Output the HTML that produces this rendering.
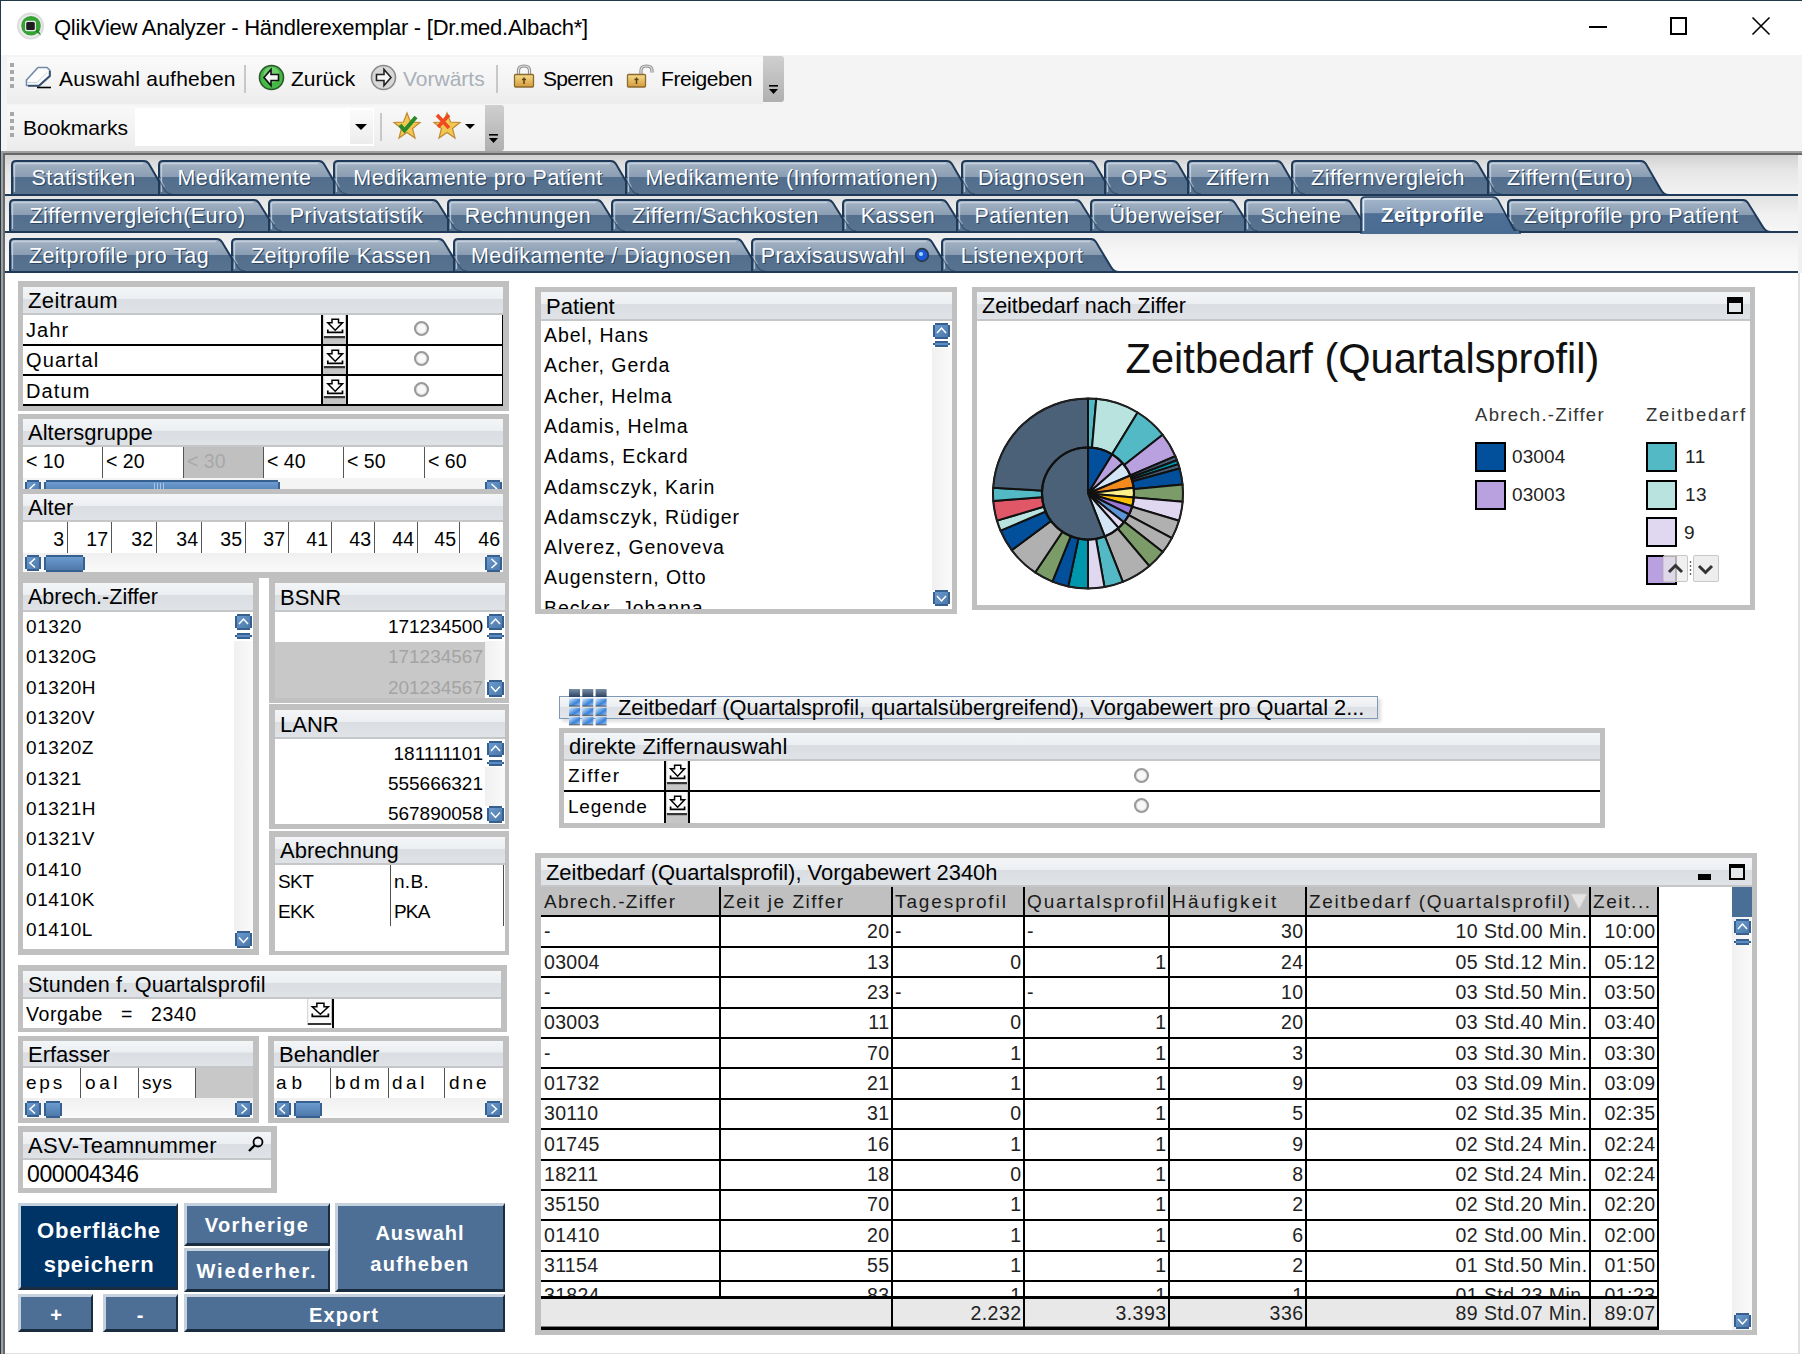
<!DOCTYPE html><html><head><meta charset="utf-8"><style>
*{margin:0;padding:0;box-sizing:border-box}
html,body{width:1802px;height:1354px;overflow:hidden;background:#fff;position:relative;font-family:"Liberation Sans",sans-serif;color:#000}
body div,body svg{position:absolute}
.t{white-space:pre;line-height:1}
.cap{background:linear-gradient(#f4f6f8 0%,#e9ecef 45%,#dde1e6 46%,#dfe3e8 100%);border-bottom:1px solid #c4c6c8}
.frame{background:#c0c0c0}
.sb{background:#4f7db3;border:1px solid #35608f;border-radius:2px}
.btn{background:#4e7097;border-top:2px solid #b8c4d0;border-left:2px solid #b8c4d0;border-right:2px solid #223b57;border-bottom:2px solid #223b57;color:#fff;font-weight:bold;text-align:center;text-shadow:1px 1px 0 #2a3f58}
</style></head><body><div style="left:0px;top:0px;width:1802px;height:55px;background:#fff"></div>
<div style="left:0px;top:0px;width:1802px;height:1px;background:#22394a"></div>
<div style="left:0px;top:0px;width:1px;height:1354px;background:#22394a"></div>
<svg style="left:16px;top:11px" width="30" height="30" viewBox="0 0 30 30">
<circle cx="14.5" cy="15" r="13.5" fill="#dcdcdc"/>
<circle cx="14.5" cy="15" r="11.5" fill="#ececec"/>
<circle cx="15" cy="14.8" r="9.8" fill="#36a236"/>
<path d="M19 20 L25 24.5 L22 18Z" fill="#1e8a1e"/>
<rect x="9" y="9.8" width="11" height="10.5" rx="2" fill="#e8e8e8"/>
<rect x="10.2" y="11" width="8.6" height="8" rx="1.5" fill="#1e1e1e"/>
</svg>
<div class="t" style="left:54px;top:17px;font-size:22px;letter-spacing:-0.25px;color:#000">QlikView Analyzer - Händlerexemplar - [Dr.med.Albach*]</div>
<div style="left:1589px;top:26px;width:18px;height:2px;background:#000"></div>
<div style="left:1670px;top:17px;width:17px;height:18px;border:2px solid #000"></div>
<svg style="left:1751px;top:16px" width="20" height="20" viewBox="0 0 20 20"><path d="M1.5 1.5L18.5 18.5M18.5 1.5L1.5 18.5" stroke="#000" stroke-width="1.6"/></svg>
<div style="left:1px;top:55px;width:1801px;height:96px;background:#f4f4f4"></div>
<div style="left:7px;top:57px;width:756px;height:47px;background:linear-gradient(#fafafa,#f3f3f3 60%,#ececec)"></div>
<div style="left:10px;top:63px;width:4px;height:4px;background:#a8a8a8"></div>
<div style="left:10px;top:70px;width:4px;height:4px;background:#a8a8a8"></div>
<div style="left:10px;top:77px;width:4px;height:4px;background:#a8a8a8"></div>
<div style="left:10px;top:84px;width:4px;height:4px;background:#a8a8a8"></div>
<div style="left:763px;top:56px;width:21px;height:46px;background:linear-gradient(#cfcfcf,#b0b0b0);border-radius:0 3px 3px 0"></div>
<svg style="left:767px;top:84px" width="14" height="14" viewBox="0 0 14 14"><rect x="2" y="1" width="9" height="1.6" fill="#000"/><path d="M2 5h9l-4.5 5z" fill="#000"/></svg>
<svg style="left:25px;top:66px" width="28" height="24" viewBox="0 0 28 24">
<path d="M1.5,19.5 V14 L13,1.5 H22 L24.8,4.3 V10 L14,19.8Z" fill="#fdfdfd" stroke="#7189a8" stroke-width="1.6" stroke-linejoin="round"/>
<path d="M24.8,5 V10 L14,19.8 H3" fill="none" stroke="#3a5272" stroke-width="2"/>
<path d="M3,16.5 H12 L22,6.5" fill="none" stroke="#c8d2de" stroke-width="1"/>
<path d="M12,21.5 H26" stroke="#000" stroke-width="1.6"/>
</svg>
<div class="t" style="left:59px;top:68px;font-size:21px;letter-spacing:0.25px;color:#000">Auswahl aufheben</div>
<div style="left:244px;top:65px;width:2px;height:28px;background:#c8c8c8"></div>
<svg style="left:258px;top:64px" width="27" height="27" viewBox="0 0 27 27">
<circle cx="13.5" cy="13.5" r="12" fill="#45b845" stroke="#2a5a2a" stroke-width="1.6"/>
<circle cx="13.5" cy="11" r="8" fill="#8fdc8f" opacity=".6"/>
<path d="M6 13.5 L13 5.5 V10.5 H20.5 V16.5 H13 V21.5Z" fill="#f4f4f4" stroke="#111" stroke-width="1.6"/>
</svg>
<div class="t" style="left:291px;top:68px;font-size:21px;color:#000">Zurück</div>
<svg style="left:370px;top:64px" width="27" height="27" viewBox="0 0 27 27">
<circle cx="13.5" cy="13.5" r="12" fill="#d8d8d8" stroke="#8a8a8a" stroke-width="1.6"/>
<path d="M21 13.5 L14 5.5 V10.5 H6.5 V16.5 H14 V21.5Z" fill="#f8f8f8" stroke="#222" stroke-width="1.6"/>
</svg>
<div class="t" style="left:403px;top:68px;font-size:21px;color:#a9b0b8">Vorwärts</div>
<div style="left:496px;top:65px;width:2px;height:28px;background:#c8c8c8"></div>
<svg style="left:513px;top:64px" width="22" height="25" viewBox="0 0 22 25"><defs><linearGradient id="lk" x1="0" y1="0" x2="0" y2="1"><stop offset="0" stop-color="#f6dc8c"/><stop offset="1" stop-color="#d49a3a"/></linearGradient></defs>
<path d="M5.5 11 V6.5 Q5.5 2 11 2 Q16.5 2 16.5 6.5 V11" fill="none" stroke="#8c8c8c" stroke-width="3.2"/>
<path d="M5.5 11 V6.5 Q5.5 2 11 2 Q16.5 2 16.5 6.5 V11" fill="none" stroke="#e6e6e6" stroke-width="1.2"/>
<rect x="1.5" y="10.5" width="19" height="12.5" rx="1" fill="url(#lk)" stroke="#8a6a30" stroke-width="1.3"/>
<path d="M11 13.5 V20 M9 15.5 H13" stroke="#5a4015" stroke-width="1.5"/>
</svg>
<div class="t" style="left:543px;top:68px;font-size:21px;letter-spacing:-0.7px;color:#000">Sperren</div>
<svg style="left:626px;top:64px" width="30" height="25" viewBox="0 0 30 25"><defs><linearGradient id="lk2" x1="0" y1="0" x2="0" y2="1"><stop offset="0" stop-color="#f6dc8c"/><stop offset="1" stop-color="#d49a3a"/></linearGradient></defs>
<path d="M15 11 V6.5 Q15 2 20.5 2 Q26 2 26 6.5 V8.5" fill="none" stroke="#8c8c8c" stroke-width="3.2"/>
<path d="M15 11 V6.5 Q15 2 20.5 2 Q26 2 26 6.5 V8.5" fill="none" stroke="#e6e6e6" stroke-width="1.2"/>
<rect x="1.5" y="10.5" width="18" height="12.5" rx="1" fill="url(#lk2)" stroke="#8a6a30" stroke-width="1.3"/>
<path d="M10.5 13.5 V20 M8.5 15.5 H12.5" stroke="#5a4015" stroke-width="1.5"/>
</svg>
<div class="t" style="left:661px;top:68px;font-size:21px;letter-spacing:-0.4px;color:#000">Freigeben</div>
<div style="left:7px;top:106px;width:478px;height:45px;background:linear-gradient(#f8f8f8,#f2f2f2 60%,#ebebeb)"></div>
<div style="left:10px;top:112px;width:4px;height:4px;background:#a8a8a8"></div>
<div style="left:10px;top:119px;width:4px;height:4px;background:#a8a8a8"></div>
<div style="left:10px;top:126px;width:4px;height:4px;background:#a8a8a8"></div>
<div style="left:10px;top:133px;width:4px;height:4px;background:#a8a8a8"></div>
<div class="t" style="left:23px;top:117px;font-size:21px;color:#000">Bookmarks</div>
<div style="left:135px;top:108px;width:239px;height:38px;background:#fff"></div>
<div style="left:350px;top:110px;width:23px;height:34px;background:linear-gradient(#fbfbfb,#ececec)"></div>
<svg style="left:354px;top:122px" width="14" height="10" viewBox="0 0 14 10"><path d="M1 2h12l-6 6z" fill="#000"/></svg>
<div style="left:380px;top:113px;width:2px;height:28px;background:#c8c8c8"></div>
<svg style="left:392px;top:111px" width="30" height="30" viewBox="0 0 30 30">
<path d="M15 2 L18.5 11 L28 11.5 L20.5 17.5 L23 27 L15 21.5 L7 27 L9.5 17.5 L2 11.5 L11.5 11Z" fill="#f3c850" stroke="#c08830" stroke-width="1.2"/>
<path d="M8 14 L12.5 19.5 L24 6" fill="none" stroke="#2a8a2a" stroke-width="4"/>
</svg>
<svg style="left:432px;top:111px" width="30" height="30" viewBox="0 0 30 30">
<path d="M15 2 L18.5 11 L28 11.5 L20.5 17.5 L23 27 L15 21.5 L7 27 L9.5 17.5 L2 11.5 L11.5 11Z" fill="#f3c850" stroke="#c08830" stroke-width="1.2"/>
<path d="M5 4 L17 17 M17 4 L6 16" fill="none" stroke="#f04a20" stroke-width="3.6"/>
</svg>
<svg style="left:464px;top:123px" width="12" height="8" viewBox="0 0 12 8"><path d="M1 1h10l-5 5z" fill="#000"/></svg>
<div style="left:485px;top:105px;width:19px;height:46px;background:linear-gradient(#cfcfcf,#b0b0b0);border-radius:0 3px 3px 0"></div>
<svg style="left:487px;top:133px" width="14" height="14" viewBox="0 0 14 14"><rect x="2" y="1" width="9" height="1.6" fill="#000"/><path d="M2 5h9l-4.5 5z" fill="#000"/></svg>
<div style="left:1px;top:151px;width:1801px;height:2px;background:#a0a0a0"></div>
<div style="left:3px;top:153px;width:1799px;height:2px;background:#686868"></div>
<div style="left:1px;top:151px;width:2px;height:1203px;background:#a0a0a0"></div>
<div style="left:3px;top:153px;width:2px;height:1201px;background:#686868"></div>
<div style="left:5px;top:155px;width:1793px;height:39px;background:linear-gradient(#d2d2d2,#e6e6e6 40%,#f2f2f2)"></div>
<div style="left:5px;top:196px;width:1793px;height:35px;background:linear-gradient(#e2e2e2,#f0f0f0 50%,#f6f6f6)"></div>
<div style="left:5px;top:233px;width:1793px;height:38px;background:linear-gradient(#ececec,#f6f6f6 50%,#fafafa)"></div>
<div style="left:1798px;top:155px;width:4px;height:118px;background:#f0f0f0"></div>
<svg style="left:0;top:150px" width="1802" height="130" viewBox="0 150 1802 130"><defs><linearGradient id="tg" x1="0" y1="0" x2="0" y2="1"><stop offset="0" stop-color="#a6b5c6"/><stop offset=".47" stop-color="#8a9db2"/><stop offset=".48" stop-color="#536f8d"/><stop offset="1" stop-color="#58728f"/></linearGradient><linearGradient id="ta" x1="0" y1="0" x2="0" y2="1"><stop offset="0" stop-color="#a4b6ca"/><stop offset=".45" stop-color="#8ba2bb"/><stop offset=".46" stop-color="#4f6f95"/><stop offset="1" stop-color="#4a6c93"/></linearGradient></defs><rect x="5" y="194" width="1793" height="2" fill="#1f3a59"/><path d="M12,195 L12,165 Q12,161 16,161 L144,161 Q147,161 149,164 L164,190 Q167,195 172,195 Z" fill="url(#tg)" stroke="#1f3a59" stroke-width="2"/><path d="M14.5,192 L14.5,165 Q14.5,163.5 17,163.5 L143,163.5" fill="none" stroke="#cad7e4" stroke-width="1.3" opacity=".8"/><path d="M159,195 L159,165 Q159,161 163,161 L319,161 Q322,161 324,164 L339,190 Q342,195 347,195 Z" fill="url(#tg)" stroke="#1f3a59" stroke-width="2"/><path d="M161.5,192 L161.5,165 Q161.5,163.5 164,163.5 L318,163.5" fill="none" stroke="#cad7e4" stroke-width="1.3" opacity=".8"/><path d="M158,177 L164,189 Q167,194 172,194" fill="none" stroke="#1f3a59" stroke-width="1.4" opacity=".55"/><path d="M159.5,178 L164.5,187" fill="none" stroke="#c0cedc" stroke-width="1.2" opacity=".6"/><path d="M334,195 L334,165 Q334,161 338,161 L611,161 Q614,161 616,164 L631,190 Q634,195 639,195 Z" fill="url(#tg)" stroke="#1f3a59" stroke-width="2"/><path d="M336.5,192 L336.5,165 Q336.5,163.5 339,163.5 L610,163.5" fill="none" stroke="#cad7e4" stroke-width="1.3" opacity=".8"/><path d="M333,177 L339,189 Q342,194 347,194" fill="none" stroke="#1f3a59" stroke-width="1.4" opacity=".55"/><path d="M334.5,178 L339.5,187" fill="none" stroke="#c0cedc" stroke-width="1.2" opacity=".6"/><path d="M626,195 L626,165 Q626,161 630,161 L947,161 Q950,161 952,164 L967,190 Q970,195 975,195 Z" fill="url(#tg)" stroke="#1f3a59" stroke-width="2"/><path d="M628.5,192 L628.5,165 Q628.5,163.5 631,163.5 L946,163.5" fill="none" stroke="#cad7e4" stroke-width="1.3" opacity=".8"/><path d="M625,177 L631,189 Q634,194 639,194" fill="none" stroke="#1f3a59" stroke-width="1.4" opacity=".55"/><path d="M626.5,178 L631.5,187" fill="none" stroke="#c0cedc" stroke-width="1.2" opacity=".6"/><path d="M962,195 L962,165 Q962,161 966,161 L1090,161 Q1093,161 1095,164 L1110,190 Q1113,195 1118,195 Z" fill="url(#tg)" stroke="#1f3a59" stroke-width="2"/><path d="M964.5,192 L964.5,165 Q964.5,163.5 967,163.5 L1089,163.5" fill="none" stroke="#cad7e4" stroke-width="1.3" opacity=".8"/><path d="M961,177 L967,189 Q970,194 975,194" fill="none" stroke="#1f3a59" stroke-width="1.4" opacity=".55"/><path d="M962.5,178 L967.5,187" fill="none" stroke="#c0cedc" stroke-width="1.2" opacity=".6"/><path d="M1105,195 L1105,165 Q1105,161 1109,161 L1173,161 Q1176,161 1178,164 L1193,190 Q1196,195 1201,195 Z" fill="url(#tg)" stroke="#1f3a59" stroke-width="2"/><path d="M1107.5,192 L1107.5,165 Q1107.5,163.5 1110,163.5 L1172,163.5" fill="none" stroke="#cad7e4" stroke-width="1.3" opacity=".8"/><path d="M1104,177 L1110,189 Q1113,194 1118,194" fill="none" stroke="#1f3a59" stroke-width="1.4" opacity=".55"/><path d="M1105.5,178 L1110.5,187" fill="none" stroke="#c0cedc" stroke-width="1.2" opacity=".6"/><path d="M1188,195 L1188,165 Q1188,161 1192,161 L1277,161 Q1280,161 1282,164 L1297,190 Q1300,195 1305,195 Z" fill="url(#tg)" stroke="#1f3a59" stroke-width="2"/><path d="M1190.5,192 L1190.5,165 Q1190.5,163.5 1193,163.5 L1276,163.5" fill="none" stroke="#cad7e4" stroke-width="1.3" opacity=".8"/><path d="M1187,177 L1193,189 Q1196,194 1201,194" fill="none" stroke="#1f3a59" stroke-width="1.4" opacity=".55"/><path d="M1188.5,178 L1193.5,187" fill="none" stroke="#c0cedc" stroke-width="1.2" opacity=".6"/><path d="M1292,195 L1292,165 Q1292,161 1296,161 L1473,161 Q1476,161 1478,164 L1493,190 Q1496,195 1501,195 Z" fill="url(#tg)" stroke="#1f3a59" stroke-width="2"/><path d="M1294.5,192 L1294.5,165 Q1294.5,163.5 1297,163.5 L1472,163.5" fill="none" stroke="#cad7e4" stroke-width="1.3" opacity=".8"/><path d="M1291,177 L1297,189 Q1300,194 1305,194" fill="none" stroke="#1f3a59" stroke-width="1.4" opacity=".55"/><path d="M1292.5,178 L1297.5,187" fill="none" stroke="#c0cedc" stroke-width="1.2" opacity=".6"/><path d="M1488,195 L1488,165 Q1488,161 1492,161 L1641,161 Q1644,161 1646,164 L1661,190 Q1664,195 1669,195 Z" fill="url(#tg)" stroke="#1f3a59" stroke-width="2"/><path d="M1490.5,192 L1490.5,165 Q1490.5,163.5 1493,163.5 L1640,163.5" fill="none" stroke="#cad7e4" stroke-width="1.3" opacity=".8"/><path d="M1487,177 L1493,189 Q1496,194 1501,194" fill="none" stroke="#1f3a59" stroke-width="1.4" opacity=".55"/><path d="M1488.5,178 L1493.5,187" fill="none" stroke="#c0cedc" stroke-width="1.2" opacity=".6"/><rect x="5" y="231" width="1793" height="2" fill="#1f3a59"/><path d="M10,232 L10,204 Q10,200 14,200 L254,200 Q257,200 259,203 L274,227 Q277,232 282,232 Z" fill="url(#tg)" stroke="#1f3a59" stroke-width="2"/><path d="M12.5,229 L12.5,204 Q12.5,202.5 15,202.5 L253,202.5" fill="none" stroke="#cad7e4" stroke-width="1.3" opacity=".8"/><path d="M269,232 L269,204 Q269,200 273,200 L433,200 Q436,200 438,203 L453,227 Q456,232 461,232 Z" fill="url(#tg)" stroke="#1f3a59" stroke-width="2"/><path d="M271.5,229 L271.5,204 Q271.5,202.5 274,202.5 L432,202.5" fill="none" stroke="#cad7e4" stroke-width="1.3" opacity=".8"/><path d="M268,216 L274,226 Q277,231 282,231" fill="none" stroke="#1f3a59" stroke-width="1.4" opacity=".55"/><path d="M269.5,217 L274.5,224" fill="none" stroke="#c0cedc" stroke-width="1.2" opacity=".6"/><path d="M448,232 L448,204 Q448,200 452,200 L597,200 Q600,200 602,203 L617,227 Q620,232 625,232 Z" fill="url(#tg)" stroke="#1f3a59" stroke-width="2"/><path d="M450.5,229 L450.5,204 Q450.5,202.5 453,202.5 L596,202.5" fill="none" stroke="#cad7e4" stroke-width="1.3" opacity=".8"/><path d="M447,216 L453,226 Q456,231 461,231" fill="none" stroke="#1f3a59" stroke-width="1.4" opacity=".55"/><path d="M448.5,217 L453.5,224" fill="none" stroke="#c0cedc" stroke-width="1.2" opacity=".6"/><path d="M612,232 L612,204 Q612,200 616,200 L828,200 Q831,200 833,203 L848,227 Q851,232 856,232 Z" fill="url(#tg)" stroke="#1f3a59" stroke-width="2"/><path d="M614.5,229 L614.5,204 Q614.5,202.5 617,202.5 L827,202.5" fill="none" stroke="#cad7e4" stroke-width="1.3" opacity=".8"/><path d="M611,216 L617,226 Q620,231 625,231" fill="none" stroke="#1f3a59" stroke-width="1.4" opacity=".55"/><path d="M612.5,217 L617.5,224" fill="none" stroke="#c0cedc" stroke-width="1.2" opacity=".6"/><path d="M843,232 L843,204 Q843,200 847,200 L942,200 Q945,200 947,203 L962,227 Q965,232 970,232 Z" fill="url(#tg)" stroke="#1f3a59" stroke-width="2"/><path d="M845.5,229 L845.5,204 Q845.5,202.5 848,202.5 L941,202.5" fill="none" stroke="#cad7e4" stroke-width="1.3" opacity=".8"/><path d="M842,216 L848,226 Q851,231 856,231" fill="none" stroke="#1f3a59" stroke-width="1.4" opacity=".55"/><path d="M843.5,217 L848.5,224" fill="none" stroke="#c0cedc" stroke-width="1.2" opacity=".6"/><path d="M957,232 L957,204 Q957,200 961,200 L1076,200 Q1079,200 1081,203 L1096,227 Q1099,232 1104,232 Z" fill="url(#tg)" stroke="#1f3a59" stroke-width="2"/><path d="M959.5,229 L959.5,204 Q959.5,202.5 962,202.5 L1075,202.5" fill="none" stroke="#cad7e4" stroke-width="1.3" opacity=".8"/><path d="M956,216 L962,226 Q965,231 970,231" fill="none" stroke="#1f3a59" stroke-width="1.4" opacity=".55"/><path d="M957.5,217 L962.5,224" fill="none" stroke="#c0cedc" stroke-width="1.2" opacity=".6"/><path d="M1091,232 L1091,204 Q1091,200 1095,200 L1230,200 Q1233,200 1235,203 L1250,227 Q1253,232 1258,232 Z" fill="url(#tg)" stroke="#1f3a59" stroke-width="2"/><path d="M1093.5,229 L1093.5,204 Q1093.5,202.5 1096,202.5 L1229,202.5" fill="none" stroke="#cad7e4" stroke-width="1.3" opacity=".8"/><path d="M1090,216 L1096,226 Q1099,231 1104,231" fill="none" stroke="#1f3a59" stroke-width="1.4" opacity=".55"/><path d="M1091.5,217 L1096.5,224" fill="none" stroke="#c0cedc" stroke-width="1.2" opacity=".6"/><path d="M1245,232 L1245,204 Q1245,200 1249,200 L1346,200 Q1349,200 1351,203 L1366,227 Q1369,232 1374,232 Z" fill="url(#tg)" stroke="#1f3a59" stroke-width="2"/><path d="M1247.5,229 L1247.5,204 Q1247.5,202.5 1250,202.5 L1345,202.5" fill="none" stroke="#cad7e4" stroke-width="1.3" opacity=".8"/><path d="M1244,216 L1250,226 Q1253,231 1258,231" fill="none" stroke="#1f3a59" stroke-width="1.4" opacity=".55"/><path d="M1245.5,217 L1250.5,224" fill="none" stroke="#c0cedc" stroke-width="1.2" opacity=".6"/><path d="M1508,232 L1508,204 Q1508,200 1512,200 L1743,200 Q1746,200 1748,203 L1763,227 Q1766,232 1771,232 Z" fill="url(#tg)" stroke="#1f3a59" stroke-width="2"/><path d="M1510.5,229 L1510.5,204 Q1510.5,202.5 1513,202.5 L1742,202.5" fill="none" stroke="#cad7e4" stroke-width="1.3" opacity=".8"/><path d="M1507,216 L1513,226 Q1516,231 1521,231" fill="none" stroke="#1f3a59" stroke-width="1.4" opacity=".55"/><path d="M1508.5,217 L1513.5,224" fill="none" stroke="#c0cedc" stroke-width="1.2" opacity=".6"/><path d="M1361,233 L1361,201 Q1361,197 1365,197 L1493,197 Q1496,197 1498,200 L1513,228 Q1516,233 1521,233 Z" fill="url(#ta)" stroke="#1f3a59" stroke-width="1.6"/><rect x="1362" y="231" width="157" height="3" fill="#4a6c93"/><path d="M1363.5,231 L1363.5,201 Q1363.5,199 1366,199 L1492,199" fill="none" stroke="#e0e8f0" stroke-width="1.5"/><rect x="5" y="271" width="1793" height="2" fill="#1f3a59"/><path d="M10,272 L10,243 Q10,239 14,239 L217,239 Q220,239 222,242 L237,267 Q240,272 245,272 Z" fill="url(#tg)" stroke="#1f3a59" stroke-width="2"/><path d="M12.5,269 L12.5,243 Q12.5,241.5 15,241.5 L216,241.5" fill="none" stroke="#cad7e4" stroke-width="1.3" opacity=".8"/><path d="M232,272 L232,243 Q232,239 236,239 L439,239 Q442,239 444,242 L459,267 Q462,272 467,272 Z" fill="url(#tg)" stroke="#1f3a59" stroke-width="2"/><path d="M234.5,269 L234.5,243 Q234.5,241.5 237,241.5 L438,241.5" fill="none" stroke="#cad7e4" stroke-width="1.3" opacity=".8"/><path d="M231,255 L237,266 Q240,271 245,271" fill="none" stroke="#1f3a59" stroke-width="1.4" opacity=".55"/><path d="M232.5,256 L237.5,264" fill="none" stroke="#c0cedc" stroke-width="1.2" opacity=".6"/><path d="M454,272 L454,243 Q454,239 458,239 L737,239 Q740,239 742,242 L757,267 Q760,272 765,272 Z" fill="url(#tg)" stroke="#1f3a59" stroke-width="2"/><path d="M456.5,269 L456.5,243 Q456.5,241.5 459,241.5 L736,241.5" fill="none" stroke="#cad7e4" stroke-width="1.3" opacity=".8"/><path d="M453,255 L459,266 Q462,271 467,271" fill="none" stroke="#1f3a59" stroke-width="1.4" opacity=".55"/><path d="M454.5,256 L459.5,264" fill="none" stroke="#c0cedc" stroke-width="1.2" opacity=".6"/><path d="M752,272 L752,243 Q752,239 756,239 L927,239 Q930,239 932,242 L947,267 Q950,272 955,272 Z" fill="url(#tg)" stroke="#1f3a59" stroke-width="2"/><path d="M754.5,269 L754.5,243 Q754.5,241.5 757,241.5 L926,241.5" fill="none" stroke="#cad7e4" stroke-width="1.3" opacity=".8"/><path d="M751,255 L757,266 Q760,271 765,271" fill="none" stroke="#1f3a59" stroke-width="1.4" opacity=".55"/><path d="M752.5,256 L757.5,264" fill="none" stroke="#c0cedc" stroke-width="1.2" opacity=".6"/><path d="M942,272 L942,243 Q942,239 946,239 L1091,239 Q1094,239 1096,242 L1111,267 Q1114,272 1119,272 Z" fill="url(#tg)" stroke="#1f3a59" stroke-width="2"/><path d="M944.5,269 L944.5,243 Q944.5,241.5 947,241.5 L1090,241.5" fill="none" stroke="#cad7e4" stroke-width="1.3" opacity=".8"/><path d="M941,255 L947,266 Q950,271 955,271" fill="none" stroke="#1f3a59" stroke-width="1.4" opacity=".55"/><path d="M942.5,256 L947.5,264" fill="none" stroke="#c0cedc" stroke-width="1.2" opacity=".6"/></svg>
<div class="t" style="left:-116.5px;top:168.0px;width:400px;text-align:center;font-size:21.5px;letter-spacing:0.45px;color:#fff;text-shadow:1px 1px 0 #2c4560">Statistiken</div>
<div class="t" style="left:44.5px;top:168.0px;width:400px;text-align:center;font-size:21.5px;letter-spacing:0.45px;color:#fff;text-shadow:1px 1px 0 #2c4560">Medikamente</div>
<div class="t" style="left:278.0px;top:168.0px;width:400px;text-align:center;font-size:21.5px;letter-spacing:0.45px;color:#fff;text-shadow:1px 1px 0 #2c4560">Medikamente pro Patient</div>
<div class="t" style="left:592.0px;top:168.0px;width:400px;text-align:center;font-size:21.5px;letter-spacing:0.45px;color:#fff;text-shadow:1px 1px 0 #2c4560">Medikamente (Informationen)</div>
<div class="t" style="left:831.5px;top:168.0px;width:400px;text-align:center;font-size:21.5px;letter-spacing:0.45px;color:#fff;text-shadow:1px 1px 0 #2c4560">Diagnosen</div>
<div class="t" style="left:944.5px;top:168.0px;width:400px;text-align:center;font-size:21.5px;letter-spacing:0.45px;color:#fff;text-shadow:1px 1px 0 #2c4560">OPS</div>
<div class="t" style="left:1038.0px;top:168.0px;width:400px;text-align:center;font-size:21.5px;letter-spacing:0.45px;color:#fff;text-shadow:1px 1px 0 #2c4560">Ziffern</div>
<div class="t" style="left:1188.0px;top:168.0px;width:400px;text-align:center;font-size:21.5px;letter-spacing:0.45px;color:#fff;text-shadow:1px 1px 0 #2c4560">Ziffernvergleich</div>
<div class="t" style="left:1370.0px;top:168.0px;width:400px;text-align:center;font-size:21.5px;letter-spacing:0.45px;color:#fff;text-shadow:1px 1px 0 #2c4560">Ziffern(Euro)</div>
<div class="t" style="left:-62.5px;top:206.0px;width:400px;text-align:center;font-size:21.5px;letter-spacing:0.45px;color:#fff;text-shadow:1px 1px 0 #2c4560">Ziffernvergleich(Euro)</div>
<div class="t" style="left:156.5px;top:206.0px;width:400px;text-align:center;font-size:21.5px;letter-spacing:0.45px;color:#fff;text-shadow:1px 1px 0 #2c4560">Privatstatistik</div>
<div class="t" style="left:328.0px;top:206.0px;width:400px;text-align:center;font-size:21.5px;letter-spacing:0.45px;color:#fff;text-shadow:1px 1px 0 #2c4560">Rechnungen</div>
<div class="t" style="left:525.5px;top:206.0px;width:400px;text-align:center;font-size:21.5px;letter-spacing:0.45px;color:#fff;text-shadow:1px 1px 0 #2c4560">Ziffern/Sachkosten</div>
<div class="t" style="left:698.0px;top:206.0px;width:400px;text-align:center;font-size:21.5px;letter-spacing:0.45px;color:#fff;text-shadow:1px 1px 0 #2c4560">Kassen</div>
<div class="t" style="left:822.0px;top:206.0px;width:400px;text-align:center;font-size:21.5px;letter-spacing:0.45px;color:#fff;text-shadow:1px 1px 0 #2c4560">Patienten</div>
<div class="t" style="left:966.0px;top:206.0px;width:400px;text-align:center;font-size:21.5px;letter-spacing:0.45px;color:#fff;text-shadow:1px 1px 0 #2c4560">Überweiser</div>
<div class="t" style="left:1101.0px;top:206.0px;width:400px;text-align:center;font-size:21.5px;letter-spacing:0.45px;color:#fff;text-shadow:1px 1px 0 #2c4560">Scheine</div>
<div class="t" style="left:1232.5px;top:204.5px;width:400px;text-align:center;font-size:21.5px;letter-spacing:0.45px;color:#fff;text-shadow:1px 1px 0 #2c4560;font-weight:bold;font-size:20.5px;letter-spacing:0.35px">Zeitprofile</div>
<div class="t" style="left:1431.0px;top:206.0px;width:400px;text-align:center;font-size:21.5px;letter-spacing:0.45px;color:#fff;text-shadow:1px 1px 0 #2c4560">Zeitprofile pro Patient</div>
<div class="t" style="left:-81.0px;top:245.5px;width:400px;text-align:center;font-size:21.5px;letter-spacing:0.45px;color:#fff;text-shadow:1px 1px 0 #2c4560">Zeitprofile pro Tag</div>
<div class="t" style="left:141.0px;top:245.5px;width:400px;text-align:center;font-size:21.5px;letter-spacing:0.45px;color:#fff;text-shadow:1px 1px 0 #2c4560">Zeitprofile Kassen</div>
<div class="t" style="left:401.0px;top:245.5px;width:400px;text-align:center;font-size:21.5px;letter-spacing:0.45px;color:#fff;text-shadow:1px 1px 0 #2c4560">Medikamente / Diagnosen</div>
<div class="t" style="left:633.0px;top:245.5px;width:400px;text-align:center;font-size:21.5px;letter-spacing:0.45px;color:#fff;text-shadow:1px 1px 0 #2c4560">Praxisauswahl</div>
<div class="t" style="left:822.0px;top:245.5px;width:400px;text-align:center;font-size:21.5px;letter-spacing:0.45px;color:#fff;text-shadow:1px 1px 0 #2c4560">Listenexport</div>
<svg style="left:913px;top:246px" width="18" height="18" viewBox="0 0 18 18"><circle cx="9" cy="9" r="6.3" fill="#1a5ad8" stroke="#2a3a50" stroke-width="1.8"/><circle cx="8" cy="8" r="2" fill="#a8d8ff"/></svg>
<div style="left:18px;top:281px;width:491px;height:130px;background:#c0c0c0"></div>
<div style="left:23px;top:287px;width:480px;height:28px;background:linear-gradient(#f3f5f7 0,#eceff2 12px,#dadee3 12px,#dfe3e7 26px,#c4c6c8 26px)"></div>
<div class="t" style="left:28px;top:290.2px;font-size:22px;letter-spacing:0.4px">Zeitraum</div>
<div style="left:23px;top:315px;width:480px;height:91px;background:#fff"></div>
<div style="left:23px;top:344px;width:480px;height:2px;background:#000"></div>
<div style="left:23px;top:374px;width:480px;height:2px;background:#000"></div>
<div style="left:23px;top:404px;width:480px;height:2px;background:#000"></div>
<div style="left:502px;top:315px;width:1px;height:91px;background:#000"></div>
<div style="left:321px;top:315px;width:2px;height:91px;background:#000"></div>
<div style="left:346px;top:315px;width:2px;height:91px;background:#000"></div>
<svg style="left:323px;top:315px" width="23" height="29" viewBox="0 0 23 29"><rect x="0" y="0" width="23" height="29" fill="#c6c6c6"/><rect x="0" y="0" width="22" height="21" fill="#fafafa"/><rect x="0" y="0" width="1.2" height="21" fill="#d8d8d8"/><rect x="1" y="21" width="21" height="2.2" fill="#1a1a1a" opacity=".85"/><path d="M9.00,4.2 H15.50 V7.8 H19.50 L12.20,15.2 L4.80,7.8 H9.00Z" fill="#fff" stroke="#000" stroke-width="1.5" stroke-linejoin="miter"/><path d="M4.80,14.5 V17.3 H19.50 V14.5" fill="none" stroke="#000" stroke-width="1.7"/></svg>
<svg style="left:412.5px;top:320.0px" width="17.0" height="17.0" viewBox="0 0 17.0 17.0"><circle cx="8.5" cy="8.5" r="6.5" fill="#ececec" stroke="#9a9a9a" stroke-width="2.2"/><circle cx="8.5" cy="8.5" r="4.0" fill="#f8f8f8"/></svg>
<div class="t" style="left:26px;top:320.1px;font-size:20px;letter-spacing:1.1px;">Jahr</div>
<svg style="left:323px;top:346px" width="23" height="28" viewBox="0 0 23 28"><rect x="0" y="0" width="23" height="28" fill="#c6c6c6"/><rect x="0" y="0" width="22" height="20" fill="#fafafa"/><rect x="0" y="0" width="1.2" height="20" fill="#d8d8d8"/><rect x="1" y="20" width="21" height="2.2" fill="#1a1a1a" opacity=".85"/><path d="M9.00,4.2 H15.50 V7.8 H19.50 L12.20,15.2 L4.80,7.8 H9.00Z" fill="#fff" stroke="#000" stroke-width="1.5" stroke-linejoin="miter"/><path d="M4.80,14.5 V17.3 H19.50 V14.5" fill="none" stroke="#000" stroke-width="1.7"/></svg>
<svg style="left:412.5px;top:350.3px" width="17.0" height="17.0" viewBox="0 0 17.0 17.0"><circle cx="8.5" cy="8.5" r="6.5" fill="#ececec" stroke="#9a9a9a" stroke-width="2.2"/><circle cx="8.5" cy="8.5" r="4.0" fill="#f8f8f8"/></svg>
<div class="t" style="left:26px;top:350.1px;font-size:20px;letter-spacing:1.1px;">Quartal</div>
<svg style="left:323px;top:376px" width="23" height="28" viewBox="0 0 23 28"><rect x="0" y="0" width="23" height="28" fill="#c6c6c6"/><rect x="0" y="0" width="22" height="20" fill="#fafafa"/><rect x="0" y="0" width="1.2" height="20" fill="#d8d8d8"/><rect x="1" y="20" width="21" height="2.2" fill="#1a1a1a" opacity=".85"/><path d="M9.00,4.2 H15.50 V7.8 H19.50 L12.20,15.2 L4.80,7.8 H9.00Z" fill="#fff" stroke="#000" stroke-width="1.5" stroke-linejoin="miter"/><path d="M4.80,14.5 V17.3 H19.50 V14.5" fill="none" stroke="#000" stroke-width="1.7"/></svg>
<svg style="left:412.5px;top:380.6px" width="17.0" height="17.0" viewBox="0 0 17.0 17.0"><circle cx="8.5" cy="8.5" r="6.5" fill="#ececec" stroke="#9a9a9a" stroke-width="2.2"/><circle cx="8.5" cy="8.5" r="4.0" fill="#f8f8f8"/></svg>
<div class="t" style="left:26px;top:380.6px;font-size:20px;letter-spacing:1.1px;">Datum</div>
<div style="left:23px;top:344px;width:480px;height:2px;background:#000"></div>
<div style="left:23px;top:374px;width:480px;height:2px;background:#000"></div>
<div style="left:23px;top:404px;width:480px;height:2px;background:#000"></div>
<div style="left:18px;top:414px;width:491px;height:80px;background:#c0c0c0"></div>
<div style="left:23px;top:419px;width:480px;height:28px;background:linear-gradient(#f3f5f7 0,#eceff2 12px,#dadee3 12px,#dfe3e7 26px,#c4c6c8 26px)"></div>
<div class="t" style="left:28px;top:422.2px;font-size:22px;letter-spacing:0px">Altersgruppe</div>
<div style="left:23px;top:447px;width:480px;height:32px;background:#fff"></div>
<div style="left:184px;top:447px;width:79px;height:31px;background:#c0c0c0"></div>
<div style="left:102px;top:447px;width:1px;height:31px;background:#555"></div>
<div style="left:183px;top:447px;width:1px;height:31px;background:#555"></div>
<div style="left:263px;top:447px;width:1px;height:31px;background:#555"></div>
<div style="left:343px;top:447px;width:1px;height:31px;background:#555"></div>
<div style="left:424px;top:447px;width:1px;height:31px;background:#555"></div>
<div class="t" style="left:26px;top:452.0px;font-size:19.5px;letter-spacing:0px;">&lt; 10</div>
<div class="t" style="left:106px;top:452.0px;font-size:19.5px;letter-spacing:0px;">&lt; 20</div>
<div class="t" style="left:187px;top:452.0px;font-size:19.5px;letter-spacing:0px;color:#a8a8a8">&lt; 30</div>
<div class="t" style="left:267px;top:452.0px;font-size:19.5px;letter-spacing:0px;">&lt; 40</div>
<div class="t" style="left:347px;top:452.0px;font-size:19.5px;letter-spacing:0px;">&lt; 50</div>
<div class="t" style="left:428px;top:452.0px;font-size:19.5px;letter-spacing:0px;">&lt; 60</div>
<div style="left:23px;top:478px;width:480px;height:11px;background:#f4f4f4"></div>
<svg style="left:25px;top:480px" width="16" height="17" viewBox="0 0 16 17"><defs><linearGradient id="sg25_480" x1="0" y1="0" x2="1" y2="1"><stop offset="0" stop-color="#6a9ad0"/><stop offset="1" stop-color="#4d78a8"/></linearGradient></defs><path d="M2,0 H14 V2 H16 V15 H14 V17 H2 V15 H0 V2 H2Z" fill="#35608f"/><rect x="2" y="2" width="12" height="13" fill="url(#sg25_480)"/><path d="M10.0,4.0 L5.0,8.5 L10.0,13.0" fill="none" stroke="#fff" stroke-width="1.5"/></svg>
<svg style="left:44px;top:480px" width="236" height="17" viewBox="0 0 236 17"><defs><linearGradient id="hg44_480" x1="0" y1="0" x2="0" y2="1"><stop offset="0" stop-color="#6c9bd0"/><stop offset="1" stop-color="#4e79a9"/></linearGradient></defs><path d="M2,0 H234 V2 H236 V15 H234 V17 H2 V15 H0 V2 H2Z" fill="#35608f"/><rect x="2" y="2" width="232" height="13" fill="url(#hg44_480)"/></svg>
<div style="left:154px;top:483px;width:1px;height:6px;background:#a8c4e4"></div>
<div style="left:157px;top:483px;width:1px;height:6px;background:#a8c4e4"></div>
<div style="left:160px;top:483px;width:1px;height:6px;background:#a8c4e4"></div>
<div style="left:163px;top:483px;width:1px;height:6px;background:#a8c4e4"></div>
<svg style="left:485px;top:480px" width="17" height="17" viewBox="0 0 17 17"><defs><linearGradient id="sg485_480" x1="0" y1="0" x2="1" y2="1"><stop offset="0" stop-color="#6a9ad0"/><stop offset="1" stop-color="#4d78a8"/></linearGradient></defs><path d="M2,0 H15 V2 H17 V15 H15 V17 H2 V15 H0 V2 H2Z" fill="#35608f"/><rect x="2" y="2" width="13" height="13" fill="url(#sg485_480)"/><path d="M6.5,4.0 L11.5,8.5 L6.5,13.0" fill="none" stroke="#fff" stroke-width="1.5"/></svg>
<div style="left:18px;top:489px;width:491px;height:89px;background:#c0c0c0"></div>
<div style="left:23px;top:494px;width:480px;height:28px;background:linear-gradient(#f3f5f7 0,#eceff2 12px,#dadee3 12px,#dfe3e7 26px,#c4c6c8 26px)"></div>
<div class="t" style="left:28px;top:497.2px;font-size:22px;letter-spacing:0px">Alter</div>
<div style="left:23px;top:522px;width:480px;height:31px;background:#fff"></div>
<div style="left:67px;top:522px;width:1px;height:31px;background:#555"></div>
<div style="left:111px;top:522px;width:1px;height:31px;background:#555"></div>
<div style="left:156px;top:522px;width:1px;height:31px;background:#555"></div>
<div style="left:201px;top:522px;width:1px;height:31px;background:#555"></div>
<div style="left:245px;top:522px;width:1px;height:31px;background:#555"></div>
<div style="left:288px;top:522px;width:1px;height:31px;background:#555"></div>
<div style="left:331px;top:522px;width:1px;height:31px;background:#555"></div>
<div style="left:374px;top:522px;width:1px;height:31px;background:#555"></div>
<div style="left:417px;top:522px;width:1px;height:31px;background:#555"></div>
<div style="left:459px;top:522px;width:1px;height:31px;background:#555"></div>
<div class="t" style="left:-536px;width:600px;text-align:right;top:529.5px;font-size:19.5px;letter-spacing:0px;">3</div>
<div class="t" style="left:-492px;width:600px;text-align:right;top:529.5px;font-size:19.5px;letter-spacing:0px;">17</div>
<div class="t" style="left:-447px;width:600px;text-align:right;top:529.5px;font-size:19.5px;letter-spacing:0px;">32</div>
<div class="t" style="left:-402px;width:600px;text-align:right;top:529.5px;font-size:19.5px;letter-spacing:0px;">34</div>
<div class="t" style="left:-358px;width:600px;text-align:right;top:529.5px;font-size:19.5px;letter-spacing:0px;">35</div>
<div class="t" style="left:-315px;width:600px;text-align:right;top:529.5px;font-size:19.5px;letter-spacing:0px;">37</div>
<div class="t" style="left:-272px;width:600px;text-align:right;top:529.5px;font-size:19.5px;letter-spacing:0px;">41</div>
<div class="t" style="left:-229px;width:600px;text-align:right;top:529.5px;font-size:19.5px;letter-spacing:0px;">43</div>
<div class="t" style="left:-186px;width:600px;text-align:right;top:529.5px;font-size:19.5px;letter-spacing:0px;">44</div>
<div class="t" style="left:-144px;width:600px;text-align:right;top:529.5px;font-size:19.5px;letter-spacing:0px;">45</div>
<div class="t" style="left:-100px;width:600px;text-align:right;top:529.5px;font-size:19.5px;letter-spacing:0px;">46</div>
<div style="left:23px;top:553px;width:480px;height:19px;background:linear-gradient(#f0f0f0,#fafafa)"></div>
<svg style="left:25px;top:555px" width="16" height="16" viewBox="0 0 16 16"><defs><linearGradient id="sg25_555" x1="0" y1="0" x2="1" y2="1"><stop offset="0" stop-color="#6a9ad0"/><stop offset="1" stop-color="#4d78a8"/></linearGradient></defs><path d="M2,0 H14 V2 H16 V14 H14 V16 H2 V14 H0 V2 H2Z" fill="#35608f"/><rect x="2" y="2" width="12" height="12" fill="url(#sg25_555)"/><path d="M10.0,3.5 L5.0,8.0 L10.0,12.5" fill="none" stroke="#fff" stroke-width="1.5"/></svg>
<svg style="left:44px;top:555px" width="41" height="17" viewBox="0 0 41 17"><defs><linearGradient id="hg44_555" x1="0" y1="0" x2="0" y2="1"><stop offset="0" stop-color="#6c9bd0"/><stop offset="1" stop-color="#4e79a9"/></linearGradient></defs><path d="M2,0 H39 V2 H41 V15 H39 V17 H2 V15 H0 V2 H2Z" fill="#35608f"/><rect x="2" y="2" width="37" height="13" fill="url(#hg44_555)"/></svg>
<svg style="left:485px;top:555px" width="17" height="17" viewBox="0 0 17 17"><defs><linearGradient id="sg485_555" x1="0" y1="0" x2="1" y2="1"><stop offset="0" stop-color="#6a9ad0"/><stop offset="1" stop-color="#4d78a8"/></linearGradient></defs><path d="M2,0 H15 V2 H17 V15 H15 V17 H2 V15 H0 V2 H2Z" fill="#35608f"/><rect x="2" y="2" width="13" height="13" fill="url(#sg485_555)"/><path d="M6.5,4.0 L11.5,8.5 L6.5,13.0" fill="none" stroke="#fff" stroke-width="1.5"/></svg>
<div style="left:18px;top:577px;width:241px;height:378px;background:#c0c0c0"></div>
<div style="left:259px;top:572px;width:10px;height:6px;background:#c0c0c0"></div>
<div style="left:23px;top:583px;width:230px;height:29px;background:linear-gradient(#f3f5f7 0,#eceff2 12px,#dadee3 12px,#dfe3e7 27px,#c4c6c8 27px)"></div>
<div class="t" style="left:28px;top:587.0px;font-size:21.5px;letter-spacing:0px">Abrech.-Ziffer</div>
<div style="left:23px;top:612px;width:230px;height:337px;background:#fff"></div>
<div style="left:234px;top:641px;width:19px;height:290px;background:linear-gradient(90deg,#f0f0f0,#fafafa)"></div>
<svg style="left:235px;top:614px" width="17" height="16" viewBox="0 0 17 16"><defs><linearGradient id="sg235_614" x1="0" y1="0" x2="1" y2="1"><stop offset="0" stop-color="#6a9ad0"/><stop offset="1" stop-color="#4d78a8"/></linearGradient></defs><path d="M2,0 H15 V2 H17 V14 H15 V16 H2 V14 H0 V2 H2Z" fill="#35608f"/><rect x="2" y="2" width="13" height="12" fill="url(#sg235_614)"/><path d="M4.0,10.0 L8.5,5.0 L13.0,10.0" fill="none" stroke="#fff" stroke-width="1.5"/></svg>
<svg style="left:235px;top:633px" width="17" height="6" viewBox="0 0 17 6"><path d="M2,0 H15 V2 H17 V4 H15 V6 H2 V4 H0 V2 H2Z" fill="#35608f"/><rect x="2" y="2" width="13" height="2" fill="#5d8cc4"/></svg>
<svg style="left:235px;top:931px" width="17" height="17" viewBox="0 0 17 17"><defs><linearGradient id="sg235_931" x1="0" y1="0" x2="1" y2="1"><stop offset="0" stop-color="#6a9ad0"/><stop offset="1" stop-color="#4d78a8"/></linearGradient></defs><path d="M2,0 H15 V2 H17 V15 H15 V17 H2 V15 H0 V2 H2Z" fill="#35608f"/><rect x="2" y="2" width="13" height="13" fill="url(#sg235_931)"/><path d="M4.0,6.5 L8.5,11.5 L13.0,6.5" fill="none" stroke="#fff" stroke-width="1.5"/></svg>
<div class="t" style="left:26px;top:616.9px;font-size:19px;letter-spacing:0.6px;">01320</div>
<div class="t" style="left:26px;top:647.3px;font-size:19px;letter-spacing:0.6px;">01320G</div>
<div class="t" style="left:26px;top:677.6px;font-size:19px;letter-spacing:0.6px;">01320H</div>
<div class="t" style="left:26px;top:708.0px;font-size:19px;letter-spacing:0.6px;">01320V</div>
<div class="t" style="left:26px;top:738.3px;font-size:19px;letter-spacing:0.6px;">01320Z</div>
<div class="t" style="left:26px;top:768.7px;font-size:19px;letter-spacing:0.6px;">01321</div>
<div class="t" style="left:26px;top:799.0px;font-size:19px;letter-spacing:0.6px;">01321H</div>
<div class="t" style="left:26px;top:829.4px;font-size:19px;letter-spacing:0.6px;">01321V</div>
<div class="t" style="left:26px;top:859.7px;font-size:19px;letter-spacing:0.6px;">01410</div>
<div class="t" style="left:26px;top:890.1px;font-size:19px;letter-spacing:0.6px;">01410K</div>
<div class="t" style="left:26px;top:920.4px;font-size:19px;letter-spacing:0.6px;">01410L</div>
<div style="left:269px;top:577px;width:240px;height:126px;background:#c0c0c0"></div>
<div style="left:275px;top:583px;width:230px;height:29px;background:linear-gradient(#f3f5f7 0,#eceff2 12px,#dadee3 12px,#dfe3e7 27px,#c4c6c8 27px)"></div>
<div class="t" style="left:280px;top:586.7px;font-size:22px;letter-spacing:0px">BSNR</div>
<div style="left:275px;top:612px;width:230px;height:86px;background:#fff"></div>
<div style="left:275px;top:642px;width:210px;height:56px;background:#c8c8c8"></div>
<div style="left:485px;top:641px;width:20px;height:39px;background:linear-gradient(90deg,#f0f0f0,#fafafa)"></div>
<svg style="left:487px;top:614px" width="17" height="16" viewBox="0 0 17 16"><defs><linearGradient id="sg487_614" x1="0" y1="0" x2="1" y2="1"><stop offset="0" stop-color="#6a9ad0"/><stop offset="1" stop-color="#4d78a8"/></linearGradient></defs><path d="M2,0 H15 V2 H17 V14 H15 V16 H2 V14 H0 V2 H2Z" fill="#35608f"/><rect x="2" y="2" width="13" height="12" fill="url(#sg487_614)"/><path d="M4.0,10.0 L8.5,5.0 L13.0,10.0" fill="none" stroke="#fff" stroke-width="1.5"/></svg>
<svg style="left:487px;top:633px" width="17" height="6" viewBox="0 0 17 6"><path d="M2,0 H15 V2 H17 V4 H15 V6 H2 V4 H0 V2 H2Z" fill="#35608f"/><rect x="2" y="2" width="13" height="2" fill="#5d8cc4"/></svg>
<svg style="left:487px;top:680px" width="17" height="17" viewBox="0 0 17 17"><defs><linearGradient id="sg487_680" x1="0" y1="0" x2="1" y2="1"><stop offset="0" stop-color="#6a9ad0"/><stop offset="1" stop-color="#4d78a8"/></linearGradient></defs><path d="M2,0 H15 V2 H17 V15 H15 V17 H2 V15 H0 V2 H2Z" fill="#35608f"/><rect x="2" y="2" width="13" height="13" fill="url(#sg487_680)"/><path d="M4.0,6.5 L8.5,11.5 L13.0,6.5" fill="none" stroke="#fff" stroke-width="1.5"/></svg>
<div class="t" style="left:-117px;width:600px;text-align:right;top:616.9px;font-size:19px;letter-spacing:0px;">171234500</div>
<div class="t" style="left:-117px;width:600px;text-align:right;top:647.4px;font-size:19px;letter-spacing:0px;color:#a4a4a4">171234567</div>
<div class="t" style="left:-117px;width:600px;text-align:right;top:677.9px;font-size:19px;letter-spacing:0px;color:#a4a4a4">201234567</div>
<div style="left:269px;top:704px;width:240px;height:125px;background:#c0c0c0"></div>
<div style="left:275px;top:710px;width:230px;height:29px;background:linear-gradient(#f3f5f7 0,#eceff2 12px,#dadee3 12px,#dfe3e7 27px,#c4c6c8 27px)"></div>
<div class="t" style="left:280px;top:713.7px;font-size:22px;letter-spacing:0px">LANR</div>
<div style="left:275px;top:739px;width:230px;height:85px;background:#fff"></div>
<div style="left:485px;top:767px;width:20px;height:39px;background:linear-gradient(90deg,#f0f0f0,#fafafa)"></div>
<svg style="left:487px;top:741px" width="17" height="16" viewBox="0 0 17 16"><defs><linearGradient id="sg487_741" x1="0" y1="0" x2="1" y2="1"><stop offset="0" stop-color="#6a9ad0"/><stop offset="1" stop-color="#4d78a8"/></linearGradient></defs><path d="M2,0 H15 V2 H17 V14 H15 V16 H2 V14 H0 V2 H2Z" fill="#35608f"/><rect x="2" y="2" width="13" height="12" fill="url(#sg487_741)"/><path d="M4.0,10.0 L8.5,5.0 L13.0,10.0" fill="none" stroke="#fff" stroke-width="1.5"/></svg>
<svg style="left:487px;top:760px" width="17" height="6" viewBox="0 0 17 6"><path d="M2,0 H15 V2 H17 V4 H15 V6 H2 V4 H0 V2 H2Z" fill="#35608f"/><rect x="2" y="2" width="13" height="2" fill="#5d8cc4"/></svg>
<svg style="left:487px;top:806px" width="17" height="17" viewBox="0 0 17 17"><defs><linearGradient id="sg487_806" x1="0" y1="0" x2="1" y2="1"><stop offset="0" stop-color="#6a9ad0"/><stop offset="1" stop-color="#4d78a8"/></linearGradient></defs><path d="M2,0 H15 V2 H17 V15 H15 V17 H2 V15 H0 V2 H2Z" fill="#35608f"/><rect x="2" y="2" width="13" height="13" fill="url(#sg487_806)"/><path d="M4.0,6.5 L8.5,11.5 L13.0,6.5" fill="none" stroke="#fff" stroke-width="1.5"/></svg>
<div class="t" style="left:-117px;width:600px;text-align:right;top:743.9px;font-size:19px;letter-spacing:0px;">181111101</div>
<div class="t" style="left:-117px;width:600px;text-align:right;top:773.9px;font-size:19px;letter-spacing:0px;">555666321</div>
<div class="t" style="left:-117px;width:600px;text-align:right;top:804.4px;font-size:19px;letter-spacing:0px;">567890058</div>
<div style="left:269px;top:831px;width:240px;height:124px;background:#c0c0c0"></div>
<div style="left:275px;top:837px;width:230px;height:28px;background:linear-gradient(#f3f5f7 0,#eceff2 12px,#dadee3 12px,#dfe3e7 26px,#c4c6c8 26px)"></div>
<div class="t" style="left:280px;top:840.2px;font-size:22px;letter-spacing:0px">Abrechnung</div>
<div style="left:275px;top:865px;width:230px;height:86px;background:#fff"></div>
<div style="left:390px;top:865px;width:1px;height:61px;background:#505050"></div>
<div style="left:503px;top:865px;width:1px;height:61px;background:#505050"></div>
<div class="t" style="left:278px;top:871.9px;font-size:19px;letter-spacing:-0.6px;">SKT</div>
<div class="t" style="left:278px;top:901.9px;font-size:19px;letter-spacing:-0.6px;">EKK</div>
<div class="t" style="left:394px;top:871.9px;font-size:19px;letter-spacing:0.3px;">n.B.</div>
<div class="t" style="left:394px;top:901.9px;font-size:19px;letter-spacing:-0.8px;">PKA</div>
<div style="left:18px;top:965px;width:489px;height:67px;background:#c0c0c0"></div>
<div style="left:23px;top:971px;width:478px;height:28px;background:linear-gradient(#f3f5f7 0,#eceff2 12px,#dadee3 12px,#dfe3e7 26px,#c4c6c8 26px)"></div>
<div class="t" style="left:28px;top:974.4px;font-size:21.6px;letter-spacing:0.2px">Stunden f. Quartalsprofil</div>
<div style="left:23px;top:999px;width:478px;height:29px;background:#fff"></div>
<div class="t" style="left:26px;top:1004.5px;font-size:19.5px;letter-spacing:0.6px;">Vorgabe   =   2340</div>
<svg style="left:307px;top:999px" width="25" height="26" viewBox="0 0 25 26"><rect x="0" y="0" width="25" height="26" fill="#c6c6c6"/><rect x="0" y="0" width="24" height="24" fill="#fafafa"/><rect x="0" y="0" width="1.2" height="24" fill="#d8d8d8"/><rect x="1" y="24" width="23" height="2.2" fill="#1a1a1a" opacity=".85"/><path d="M9.86,4.2 H16.98 V7.8 H21.36 L13.36,15.2 L5.26,7.8 H9.86Z" fill="#fff" stroke="#000" stroke-width="1.5" stroke-linejoin="miter"/><path d="M5.26,14.5 V17.3 H21.36 V14.5" fill="none" stroke="#000" stroke-width="1.7"/></svg>
<div style="left:332px;top:999px;width:2px;height:29px;background:#000"></div>
<div style="left:18px;top:1036px;width:241px;height:87px;background:#c0c0c0"></div>
<div style="left:23px;top:1041px;width:230px;height:27px;background:linear-gradient(#f3f5f7 0,#eceff2 11px,#dadee3 12px,#dfe3e7 25px,#c4c6c8 25px)"></div>
<div class="t" style="left:28px;top:1043.7px;font-size:22px;letter-spacing:0px">Erfasser</div>
<div style="left:23px;top:1068px;width:230px;height:31px;background:#fff"></div>
<div style="left:196px;top:1068px;width:57px;height:30px;background:#c8c8c8"></div>
<div style="left:80px;top:1068px;width:1px;height:30px;background:#555"></div>
<div style="left:138px;top:1068px;width:1px;height:30px;background:#555"></div>
<div style="left:195px;top:1068px;width:1px;height:30px;background:#555"></div>
<div class="t" style="left:26px;top:1072.9px;font-size:19px;letter-spacing:2.8px;">eps</div>
<div class="t" style="left:85px;top:1072.9px;font-size:19px;letter-spacing:3.6px;">oal</div>
<div class="t" style="left:142px;top:1072.9px;font-size:19px;letter-spacing:0.8px;">sys</div>
<div style="left:23px;top:1098px;width:230px;height:20px;background:linear-gradient(#f0f0f0,#fafafa)"></div>
<svg style="left:25px;top:1101px" width="16" height="16" viewBox="0 0 16 16"><defs><linearGradient id="sg25_1101" x1="0" y1="0" x2="1" y2="1"><stop offset="0" stop-color="#6a9ad0"/><stop offset="1" stop-color="#4d78a8"/></linearGradient></defs><path d="M2,0 H14 V2 H16 V14 H14 V16 H2 V14 H0 V2 H2Z" fill="#35608f"/><rect x="2" y="2" width="12" height="12" fill="url(#sg25_1101)"/><path d="M10.0,3.5 L5.0,8.0 L10.0,12.5" fill="none" stroke="#fff" stroke-width="1.5"/></svg>
<svg style="left:44px;top:1101px" width="18" height="17" viewBox="0 0 18 17"><defs><linearGradient id="hg44_1101" x1="0" y1="0" x2="0" y2="1"><stop offset="0" stop-color="#6c9bd0"/><stop offset="1" stop-color="#4e79a9"/></linearGradient></defs><path d="M2,0 H16 V2 H18 V15 H16 V17 H2 V15 H0 V2 H2Z" fill="#35608f"/><rect x="2" y="2" width="14" height="13" fill="url(#hg44_1101)"/></svg>
<svg style="left:235px;top:1101px" width="17" height="16" viewBox="0 0 17 16"><defs><linearGradient id="sg235_1101" x1="0" y1="0" x2="1" y2="1"><stop offset="0" stop-color="#6a9ad0"/><stop offset="1" stop-color="#4d78a8"/></linearGradient></defs><path d="M2,0 H15 V2 H17 V14 H15 V16 H2 V14 H0 V2 H2Z" fill="#35608f"/><rect x="2" y="2" width="13" height="12" fill="url(#sg235_1101)"/><path d="M6.5,3.5 L11.5,8.0 L6.5,12.5" fill="none" stroke="#fff" stroke-width="1.5"/></svg>
<div style="left:268px;top:1036px;width:241px;height:87px;background:#c0c0c0"></div>
<div style="left:274px;top:1041px;width:229px;height:27px;background:linear-gradient(#f3f5f7 0,#eceff2 11px,#dadee3 12px,#dfe3e7 25px,#c4c6c8 25px)"></div>
<div class="t" style="left:279px;top:1043.7px;font-size:22px;letter-spacing:0px">Behandler</div>
<div style="left:274px;top:1068px;width:229px;height:31px;background:#fff"></div>
<div style="left:330px;top:1068px;width:1px;height:30px;background:#555"></div>
<div style="left:388px;top:1068px;width:1px;height:30px;background:#555"></div>
<div style="left:444px;top:1068px;width:1px;height:30px;background:#555"></div>
<div class="t" style="left:276px;top:1072.9px;font-size:19px;letter-spacing:4.9px;">ab</div>
<div class="t" style="left:335px;top:1072.9px;font-size:19px;letter-spacing:3.9px;">bdm</div>
<div class="t" style="left:392px;top:1072.9px;font-size:19px;letter-spacing:3.5px;">dal</div>
<div class="t" style="left:449px;top:1072.9px;font-size:19px;letter-spacing:2.9px;">dne</div>
<div style="left:274px;top:1098px;width:229px;height:20px;background:linear-gradient(#f0f0f0,#fafafa)"></div>
<svg style="left:275px;top:1101px" width="16" height="16" viewBox="0 0 16 16"><defs><linearGradient id="sg275_1101" x1="0" y1="0" x2="1" y2="1"><stop offset="0" stop-color="#6a9ad0"/><stop offset="1" stop-color="#4d78a8"/></linearGradient></defs><path d="M2,0 H14 V2 H16 V14 H14 V16 H2 V14 H0 V2 H2Z" fill="#35608f"/><rect x="2" y="2" width="12" height="12" fill="url(#sg275_1101)"/><path d="M10.0,3.5 L5.0,8.0 L10.0,12.5" fill="none" stroke="#fff" stroke-width="1.5"/></svg>
<svg style="left:294px;top:1101px" width="28" height="17" viewBox="0 0 28 17"><defs><linearGradient id="hg294_1101" x1="0" y1="0" x2="0" y2="1"><stop offset="0" stop-color="#6c9bd0"/><stop offset="1" stop-color="#4e79a9"/></linearGradient></defs><path d="M2,0 H26 V2 H28 V15 H26 V17 H2 V15 H0 V2 H2Z" fill="#35608f"/><rect x="2" y="2" width="24" height="13" fill="url(#hg294_1101)"/></svg>
<svg style="left:485px;top:1101px" width="17" height="16" viewBox="0 0 17 16"><defs><linearGradient id="sg485_1101" x1="0" y1="0" x2="1" y2="1"><stop offset="0" stop-color="#6a9ad0"/><stop offset="1" stop-color="#4d78a8"/></linearGradient></defs><path d="M2,0 H15 V2 H17 V14 H15 V16 H2 V14 H0 V2 H2Z" fill="#35608f"/><rect x="2" y="2" width="13" height="12" fill="url(#sg485_1101)"/><path d="M6.5,3.5 L11.5,8.0 L6.5,12.5" fill="none" stroke="#fff" stroke-width="1.5"/></svg>
<div style="left:18px;top:1126px;width:259px;height:67px;background:#c0c0c0"></div>
<div style="left:23px;top:1132px;width:248px;height:28px;background:linear-gradient(#f3f5f7 0,#eceff2 12px,#dadee3 12px,#dfe3e7 26px,#c4c6c8 26px)"></div>
<div class="t" style="left:28px;top:1135.2px;font-size:22px;letter-spacing:0.3px">ASV-Teamnummer</div>
<div style="left:23px;top:1160px;width:248px;height:28px;background:#fff"></div>
<svg style="left:247px;top:1135px" width="18" height="18" viewBox="0 0 18 18"><circle cx="11" cy="7" r="4.5" fill="none" stroke="#000" stroke-width="1.8"/><path d="M8,10 L2,16" stroke="#000" stroke-width="2.4"/></svg>
<div class="t" style="left:27px;top:1162.5px;font-size:23px;letter-spacing:-0.4px;">000004346</div>
<div style="left:18px;top:1203px;width:160px;height:87px;background:#003366;border-top:3px solid #c5d1dd;border-left:3px solid #c5d1dd;border-bottom:3px solid #1a2c40;border-right:2px solid #1a2c40"></div>
<div class="t" style="left:-201px;width:600px;text-align:center;top:1220.4px;font-size:22px;letter-spacing:0.9px;color:#fff;font-weight:bold">Oberfläche</div>
<div class="t" style="left:-201px;width:600px;text-align:center;top:1254.4px;font-size:22px;letter-spacing:0.75px;color:#fff;font-weight:bold">speichern</div>
<div style="left:184px;top:1203px;width:146px;height:43px;background:#4e6f95;border-top:3px solid #c5d1dd;border-left:3px solid #c5d1dd;border-bottom:3px solid #1a2c40;border-right:2px solid #1a2c40"></div>
<div class="t" style="left:-43px;width:600px;text-align:center;top:1215.1px;font-size:20px;letter-spacing:1.4px;color:#fff;font-weight:bold">Vorherige</div>
<div style="left:184px;top:1248px;width:146px;height:44px;background:#4e6f95;border-top:3px solid #c5d1dd;border-left:3px solid #c5d1dd;border-bottom:3px solid #1a2c40;border-right:2px solid #1a2c40"></div>
<div class="t" style="left:-43px;width:600px;text-align:center;top:1261.1px;font-size:20px;letter-spacing:1.9px;color:#fff;font-weight:bold">Wiederher.</div>
<div style="left:335px;top:1203px;width:170px;height:89px;background:#4e6f95;border-top:3px solid #c5d1dd;border-left:3px solid #c5d1dd;border-bottom:3px solid #1a2c40;border-right:2px solid #1a2c40"></div>
<div class="t" style="left:120px;width:600px;text-align:center;top:1223.1px;font-size:20px;letter-spacing:1.0px;color:#fff;font-weight:bold">Auswahl</div>
<div class="t" style="left:120px;width:600px;text-align:center;top:1254.1px;font-size:20px;letter-spacing:1.3px;color:#fff;font-weight:bold">aufheben</div>
<div style="left:18px;top:1294px;width:75px;height:38px;background:#4e6f95;border-top:3px solid #c5d1dd;border-left:3px solid #c5d1dd;border-bottom:3px solid #1a2c40;border-right:2px solid #1a2c40"></div>
<div class="t" style="left:-244px;width:600px;text-align:center;top:1305.1px;font-size:20px;letter-spacing:0px;color:#fff;font-weight:bold">+</div>
<div style="left:103px;top:1294px;width:75px;height:38px;background:#4e6f95;border-top:3px solid #c5d1dd;border-left:3px solid #c5d1dd;border-bottom:3px solid #1a2c40;border-right:2px solid #1a2c40"></div>
<div class="t" style="left:-160px;width:600px;text-align:center;top:1305.1px;font-size:20px;letter-spacing:0px;color:#fff;font-weight:bold">-</div>
<div style="left:184px;top:1294px;width:321px;height:38px;background:#4e6f95;border-top:3px solid #c5d1dd;border-left:3px solid #c5d1dd;border-bottom:3px solid #1a2c40;border-right:2px solid #1a2c40"></div>
<div class="t" style="left:44px;width:600px;text-align:center;top:1305.1px;font-size:20px;letter-spacing:1.1px;color:#fff;font-weight:bold">Export</div>
<div style="left:535px;top:287px;width:422px;height:327px;background:#c0c0c0"></div>
<div style="left:541px;top:292px;width:411px;height:29px;background:linear-gradient(#f3f5f7 0,#eceff2 12px,#dadee3 12px,#dfe3e7 27px,#c4c6c8 27px)"></div>
<div class="t" style="left:546px;top:295.7px;font-size:22px;letter-spacing:0px">Patient</div>
<div style="left:541px;top:321px;width:411px;height:288px;background:#fff"></div>
<div style="left:541px;top:320px;width:390px;height:289px;overflow:hidden">
<div class="t" style="left:3px;top:6.0px;font-size:19.5px;letter-spacing:0.95px">Abel, Hans</div>
<div class="t" style="left:3px;top:36.3px;font-size:19.5px;letter-spacing:0.95px">Acher, Gerda</div>
<div class="t" style="left:3px;top:66.6px;font-size:19.5px;letter-spacing:0.95px">Acher, Helma</div>
<div class="t" style="left:3px;top:96.9px;font-size:19.5px;letter-spacing:0.95px">Adamis, Helma</div>
<div class="t" style="left:3px;top:127.2px;font-size:19.5px;letter-spacing:0.95px">Adams, Eckard</div>
<div class="t" style="left:3px;top:157.5px;font-size:19.5px;letter-spacing:0.95px">Adamsczyk, Karin</div>
<div class="t" style="left:3px;top:187.8px;font-size:19.5px;letter-spacing:0.95px">Adamsczyk, Rüdiger</div>
<div class="t" style="left:3px;top:218.1px;font-size:19.5px;letter-spacing:0.95px">Alverez, Genoveva</div>
<div class="t" style="left:3px;top:248.4px;font-size:19.5px;letter-spacing:0.95px">Augenstern, Otto</div>
<div class="t" style="left:3px;top:278.7px;font-size:19.5px;letter-spacing:0.95px">Becker, Johanna</div>
</div>
<div style="left:932px;top:348px;width:20px;height:242px;background:linear-gradient(90deg,#f0f0f0,#fafafa)"></div>
<svg style="left:933px;top:323px" width="17" height="16" viewBox="0 0 17 16"><defs><linearGradient id="sg933_323" x1="0" y1="0" x2="1" y2="1"><stop offset="0" stop-color="#6a9ad0"/><stop offset="1" stop-color="#4d78a8"/></linearGradient></defs><path d="M2,0 H15 V2 H17 V14 H15 V16 H2 V14 H0 V2 H2Z" fill="#35608f"/><rect x="2" y="2" width="13" height="12" fill="url(#sg933_323)"/><path d="M4.0,10.0 L8.5,5.0 L13.0,10.0" fill="none" stroke="#fff" stroke-width="1.5"/></svg>
<svg style="left:933px;top:341px" width="17" height="6" viewBox="0 0 17 6"><path d="M2,0 H15 V2 H17 V4 H15 V6 H2 V4 H0 V2 H2Z" fill="#35608f"/><rect x="2" y="2" width="13" height="2" fill="#5d8cc4"/></svg>
<svg style="left:933px;top:590px" width="17" height="16" viewBox="0 0 17 16"><defs><linearGradient id="sg933_590" x1="0" y1="0" x2="1" y2="1"><stop offset="0" stop-color="#6a9ad0"/><stop offset="1" stop-color="#4d78a8"/></linearGradient></defs><path d="M2,0 H15 V2 H17 V14 H15 V16 H2 V14 H0 V2 H2Z" fill="#35608f"/><rect x="2" y="2" width="13" height="12" fill="url(#sg933_590)"/><path d="M4.0,6.0 L8.5,11.0 L13.0,6.0" fill="none" stroke="#fff" stroke-width="1.5"/></svg>
<div style="left:972px;top:287px;width:783px;height:323px;background:#c0c0c0"></div>
<div style="left:977px;top:292px;width:773px;height:29px;background:linear-gradient(#f3f5f7 0,#eceff2 12px,#dadee3 12px,#dfe3e7 27px,#c4c6c8 27px)"></div>
<div class="t" style="left:982px;top:296.0px;font-size:21.5px;letter-spacing:0px">Zeitbedarf nach Ziffer</div>
<div style="left:977px;top:321px;width:773px;height:284px;background:#fff"></div>
<div style="left:1727px;top:297px;width:16px;height:17px;border:2px solid #000;border-top:6px solid #000;background:#e4e7ea"></div>
<div class="t" style="left:1062.5px;width:600px;text-align:center;top:337.8px;font-size:41.6px;letter-spacing:0px;color:#111">Zeitbedarf (Quartalsprofil)</div>
<svg style="left:0;top:0" width="1802" height="1354" viewBox="0 0 1802 1354"><path d="M1088,493.5 L1088.00,398.50 A95,95 0 0 1 1096.28,398.86 Z" fill="#52b9c5" stroke="#111" stroke-width="2" stroke-linejoin="round"/><path d="M1088,493.5 L1096.28,398.86 A95,95 0 0 1 1137.64,412.50 Z" fill="#b9e3df" stroke="#111" stroke-width="2" stroke-linejoin="round"/><path d="M1088,493.5 L1137.64,412.50 A95,95 0 0 1 1162.66,434.75 Z" fill="#52b9c5" stroke="#111" stroke-width="2" stroke-linejoin="round"/><path d="M1088,493.5 L1162.66,434.75 A95,95 0 0 1 1175.32,456.08 Z" fill="#b9a1e0" stroke="#111" stroke-width="2" stroke-linejoin="round"/><path d="M1088,493.5 L1175.32,456.08 A95,95 0 0 1 1176.98,460.23 Z" fill="#4b6177" stroke="#111" stroke-width="2" stroke-linejoin="round"/><path d="M1088,493.5 L1176.98,460.23 A95,95 0 0 1 1178.35,464.14 Z" fill="#0096ac" stroke="#111" stroke-width="2" stroke-linejoin="round"/><path d="M1088,493.5 L1178.35,464.14 A95,95 0 0 1 1179.63,468.43 Z" fill="#4b6177" stroke="#111" stroke-width="2" stroke-linejoin="round"/><path d="M1088,493.5 L1179.63,468.43 A95,95 0 0 1 1182.56,484.39 Z" fill="#02509c" stroke="#111" stroke-width="2" stroke-linejoin="round"/><path d="M1088,493.5 L1182.56,484.39 A95,95 0 0 1 1182.64,501.78 Z" fill="#7b9b69" stroke="#111" stroke-width="2" stroke-linejoin="round"/><path d="M1088,493.5 L1182.64,501.78 A95,95 0 0 1 1178.99,520.80 Z" fill="#e0d8f0" stroke="#111" stroke-width="2" stroke-linejoin="round"/><path d="M1088,493.5 L1178.99,520.80 A95,95 0 0 1 1171.88,538.10 Z" fill="#b0b0b0" stroke="#111" stroke-width="2" stroke-linejoin="round"/><path d="M1088,493.5 L1171.88,538.10 A95,95 0 0 1 1162.86,551.99 Z" fill="#b0b0b0" stroke="#111" stroke-width="2" stroke-linejoin="round"/><path d="M1088,493.5 L1162.86,551.99 A95,95 0 0 1 1149.32,566.06 Z" fill="#7b9b69" stroke="#111" stroke-width="2" stroke-linejoin="round"/><path d="M1088,493.5 L1149.32,566.06 A95,95 0 0 1 1122.82,581.89 Z" fill="#b0b0b0" stroke="#111" stroke-width="2" stroke-linejoin="round"/><path d="M1088,493.5 L1122.82,581.89 A95,95 0 0 1 1104.50,587.06 Z" fill="#52b9c5" stroke="#111" stroke-width="2" stroke-linejoin="round"/><path d="M1088,493.5 L1104.50,587.06 A95,95 0 0 1 1088.00,588.50 Z" fill="#e0d8f0" stroke="#111" stroke-width="2" stroke-linejoin="round"/><path d="M1088,493.5 L1088.00,588.50 A95,95 0 0 1 1068.25,586.42 Z" fill="#0096ac" stroke="#111" stroke-width="2" stroke-linejoin="round"/><path d="M1088,493.5 L1068.25,586.42 A95,95 0 0 1 1052.41,581.58 Z" fill="#02509c" stroke="#111" stroke-width="2" stroke-linejoin="round"/><path d="M1088,493.5 L1052.41,581.58 A95,95 0 0 1 1035.15,572.44 Z" fill="#7b9b69" stroke="#111" stroke-width="2" stroke-linejoin="round"/><path d="M1088,493.5 L1035.15,572.44 A95,95 0 0 1 1011.73,550.14 Z" fill="#b0b0b0" stroke="#111" stroke-width="2" stroke-linejoin="round"/><path d="M1088,493.5 L1011.73,550.14 A95,95 0 0 1 1000.55,530.62 Z" fill="#02509c" stroke="#111" stroke-width="2" stroke-linejoin="round"/><path d="M1088,493.5 L1000.55,530.62 A95,95 0 0 1 996.96,520.64 Z" fill="#b9e3df" stroke="#111" stroke-width="2" stroke-linejoin="round"/><path d="M1088,493.5 L996.96,520.64 A95,95 0 0 1 993.29,500.95 Z" fill="#e05868" stroke="#111" stroke-width="2" stroke-linejoin="round"/><path d="M1088,493.5 L993.29,500.95 A95,95 0 0 1 993.18,487.70 Z" fill="#52b9c5" stroke="#111" stroke-width="2" stroke-linejoin="round"/><path d="M1088,493.5 L993.18,487.70 A95,95 0 0 1 1088.00,398.50 Z" fill="#4b6177" stroke="#111" stroke-width="2" stroke-linejoin="round"/><path d="M1088,493.5 L1088.00,447.50 A46,46 0 0 1 1112.17,454.36 Z" fill="#02509c" stroke="#111" stroke-width="2" stroke-linejoin="round"/><path d="M1088,493.5 L1112.17,454.36 A46,46 0 0 1 1122.56,463.14 Z" fill="#b9a1e0" stroke="#111" stroke-width="2" stroke-linejoin="round"/><path d="M1088,493.5 L1122.56,463.14 A46,46 0 0 1 1130.34,475.53 Z" fill="#d4e6f6" stroke="#111" stroke-width="2" stroke-linejoin="round"/><path d="M1088,493.5 L1130.34,475.53 A46,46 0 0 1 1133.63,487.66 Z" fill="#f28a1e" stroke="#111" stroke-width="2" stroke-linejoin="round"/><path d="M1088,493.5 L1133.63,487.66 A46,46 0 0 1 1133.82,497.51 Z" fill="#fff08a" stroke="#111" stroke-width="2" stroke-linejoin="round"/><path d="M1088,493.5 L1133.82,497.51 A46,46 0 0 1 1132.22,506.18 Z" fill="#ffbf00" stroke="#111" stroke-width="2" stroke-linejoin="round"/><path d="M1088,493.5 L1132.22,506.18 A46,46 0 0 1 1128.99,514.38 Z" fill="#9a78d8" stroke="#111" stroke-width="2" stroke-linejoin="round"/><path d="M1088,493.5 L1128.99,514.38 A46,46 0 0 1 1123.85,522.32 Z" fill="#5b95d6" stroke="#111" stroke-width="2" stroke-linejoin="round"/><path d="M1088,493.5 L1123.85,522.32 A46,46 0 0 1 1118.54,527.90 Z" fill="#e0d8f0" stroke="#111" stroke-width="2" stroke-linejoin="round"/><path d="M1088,493.5 L1118.54,527.90 A46,46 0 0 1 1104.71,536.36 Z" fill="#d4e6f6" stroke="#111" stroke-width="2" stroke-linejoin="round"/><path d="M1088,493.5 L1104.71,536.36 A46,46 0 1 1 1088.00,447.50 Z" fill="#4b6177" stroke="#111" stroke-width="2" stroke-linejoin="round"/><circle cx="1088" cy="493.5" r="46" fill="none" stroke="#111" stroke-width="2.2"/><circle cx="1088" cy="493.5" r="95" fill="none" stroke="#222" stroke-width="1.4"/></svg>
<div class="t" style="left:1475px;top:405.8px;font-size:18.5px;letter-spacing:1.3px;color:#333">Abrech.-Ziffer</div>
<div class="t" style="left:1646px;top:405.8px;font-size:18.5px;letter-spacing:1.75px;color:#333">Zeitbedarf</div>
<div style="left:1475px;top:442px;width:31px;height:30px;background:#02509c;border:2px solid #000"></div>
<div style="left:1475px;top:480px;width:31px;height:30px;background:#b9a1e0;border:2px solid #000"></div>
<div style="left:1646px;top:442px;width:31px;height:30px;background:#52b9c5;border:2px solid #000"></div>
<div style="left:1646px;top:480px;width:31px;height:30px;background:#b9e3df;border:2px solid #000"></div>
<div style="left:1646px;top:517px;width:31px;height:30px;background:#e0d8f0;border:2px solid #000"></div>
<div style="left:1646px;top:555px;width:31px;height:30px;background:#b9a1e0;border:2px solid #000"></div>
<div class="t" style="left:1512px;top:447.4px;font-size:19px;letter-spacing:0.1px;color:#222">03004</div>
<div class="t" style="left:1512px;top:485.4px;font-size:19px;letter-spacing:0.1px;color:#222">03003</div>
<div class="t" style="left:1685px;top:447.4px;font-size:19px;letter-spacing:0.5px;color:#222">11</div>
<div class="t" style="left:1685px;top:485.4px;font-size:19px;letter-spacing:0.5px;color:#222">13</div>
<div class="t" style="left:1684px;top:522.9px;font-size:19px;letter-spacing:0px;color:#222">9</div>
<div style="left:1663px;top:555px;width:25px;height:27px;background:rgba(235,235,235,.75);border:1px solid #c8c8c8;border-radius:2px"></div>
<div style="left:1693px;top:555px;width:26px;height:27px;background:rgba(235,235,235,.85);border:1px solid #c8c8c8;border-radius:2px"></div>
<svg style="left:1663px;top:555px" width="56" height="27" viewBox="0 0 56 27"><path d="M6,17 L12.5,10.5 L19,17" fill="none" stroke="#333" stroke-width="3"/><path d="M36,11 L42.5,17.5 L49,11" fill="none" stroke="#333" stroke-width="3"/><path d="M27.5,6 V22" stroke="#666" stroke-width="1.4" stroke-dasharray="2 2"/></svg>
<div style="left:562px;top:699px;width:819px;height:23px;background:rgba(0,0,0,.12);filter:blur(1.5px)"></div>
<div style="left:559px;top:696px;width:819px;height:23px;background:linear-gradient(#f4f6f8,#eceff2 45%,#dde1e6 50%,#e2e5e9);border:1px solid #7e98b6"></div>
<div class="t" style="left:618px;top:697.0px;font-size:21.8px;letter-spacing:0px;color:#000">Zeitbedarf (Quartalsprofil, quartalsübergreifend), Vorgabewert pro Quartal 2...</div>
<svg style="left:567px;top:688px" width="44" height="40" viewBox="0 0 44 40"><defs><linearGradient id="gr1" x1="0" y1="0" x2="0" y2="1"><stop offset="0" stop-color="#7a90a8"/><stop offset="1" stop-color="#2a4060"/></linearGradient><linearGradient id="gr2" x1="0" y1="0" x2="1" y2="1"><stop offset="0" stop-color="#d8ecff"/><stop offset=".6" stop-color="#3a82d8"/><stop offset="1" stop-color="#a8c8f0"/></linearGradient></defs><rect x="2.0" y="1" width="11" height="8" fill="url(#gr1)"/><rect x="2.0" y="10.5" width="11" height="7.5" fill="url(#gr2)"/><rect x="2.0" y="17.5" width="11" height="1.3" fill="#444" opacity=".7"/><rect x="2.0" y="19.8" width="11" height="7.5" fill="url(#gr2)"/><rect x="2.0" y="26.8" width="11" height="1.3" fill="#444" opacity=".7"/><rect x="2.0" y="29.1" width="11" height="7.5" fill="url(#gr2)"/><rect x="2.0" y="36.1" width="11" height="1.3" fill="#444" opacity=".7"/><rect x="15.3" y="1" width="11" height="8" fill="url(#gr1)"/><rect x="15.3" y="10.5" width="11" height="7.5" fill="url(#gr2)"/><rect x="15.3" y="17.5" width="11" height="1.3" fill="#444" opacity=".7"/><rect x="15.3" y="19.8" width="11" height="7.5" fill="url(#gr2)"/><rect x="15.3" y="26.8" width="11" height="1.3" fill="#444" opacity=".7"/><rect x="15.3" y="29.1" width="11" height="7.5" fill="url(#gr2)"/><rect x="15.3" y="36.1" width="11" height="1.3" fill="#444" opacity=".7"/><rect x="28.6" y="1" width="11" height="8" fill="url(#gr1)"/><rect x="28.6" y="10.5" width="11" height="7.5" fill="url(#gr2)"/><rect x="28.6" y="17.5" width="11" height="1.3" fill="#444" opacity=".7"/><rect x="28.6" y="19.8" width="11" height="7.5" fill="url(#gr2)"/><rect x="28.6" y="26.8" width="11" height="1.3" fill="#444" opacity=".7"/><rect x="28.6" y="29.1" width="11" height="7.5" fill="url(#gr2)"/><rect x="28.6" y="36.1" width="11" height="1.3" fill="#444" opacity=".7"/></svg>
<div style="left:559px;top:728px;width:1046px;height:100px;background:#c0c0c0"></div>
<div style="left:564px;top:733px;width:1036px;height:28px;background:linear-gradient(#f3f5f7 0,#eceff2 12px,#dadee3 12px,#dfe3e7 26px,#c4c6c8 26px)"></div>
<div class="t" style="left:569px;top:736.2px;font-size:22px;letter-spacing:0.17px">direkte Ziffernauswahl</div>
<div style="left:564px;top:761px;width:1036px;height:62px;background:#fff"></div>
<div style="left:564px;top:790px;width:1036px;height:2px;background:#000"></div>
<div style="left:664px;top:761px;width:2px;height:62px;background:#000"></div>
<div style="left:688px;top:761px;width:2px;height:62px;background:#000"></div>
<svg style="left:666px;top:761px" width="22" height="29" viewBox="0 0 22 29"><rect x="0" y="0" width="22" height="29" fill="#c6c6c6"/><rect x="0" y="0" width="21" height="21" fill="#fafafa"/><rect x="0" y="0" width="1.2" height="21" fill="#d8d8d8"/><rect x="1" y="21" width="20" height="2.2" fill="#1a1a1a" opacity=".85"/><path d="M8.57,4.2 H14.76 V7.8 H18.57 L11.62,15.2 L4.57,7.8 H8.57Z" fill="#fff" stroke="#000" stroke-width="1.5" stroke-linejoin="miter"/><path d="M4.57,14.5 V17.3 H18.57 V14.5" fill="none" stroke="#000" stroke-width="1.7"/></svg>
<svg style="left:666px;top:792px" width="22" height="31" viewBox="0 0 22 31"><rect x="0" y="0" width="22" height="31" fill="#c6c6c6"/><rect x="0" y="0" width="21" height="21" fill="#fafafa"/><rect x="0" y="0" width="1.2" height="21" fill="#d8d8d8"/><rect x="1" y="21" width="20" height="2.2" fill="#1a1a1a" opacity=".85"/><path d="M8.57,4.2 H14.76 V7.8 H18.57 L11.62,15.2 L4.57,7.8 H8.57Z" fill="#fff" stroke="#000" stroke-width="1.5" stroke-linejoin="miter"/><path d="M4.57,14.5 V17.3 H18.57 V14.5" fill="none" stroke="#000" stroke-width="1.7"/></svg>
<div class="t" style="left:568px;top:766.4px;font-size:19px;letter-spacing:1.65px;">Ziffer</div>
<div class="t" style="left:568px;top:797.4px;font-size:19px;letter-spacing:0.8px;">Legende</div>
<svg style="left:1132.5px;top:766.5px" width="17.0" height="17.0" viewBox="0 0 17.0 17.0"><circle cx="8.5" cy="8.5" r="6.5" fill="#ececec" stroke="#9a9a9a" stroke-width="2.2"/><circle cx="8.5" cy="8.5" r="4.0" fill="#f8f8f8"/></svg>
<svg style="left:1132.5px;top:796.5px" width="17.0" height="17.0" viewBox="0 0 17.0 17.0"><circle cx="8.5" cy="8.5" r="6.5" fill="#ececec" stroke="#9a9a9a" stroke-width="2.2"/><circle cx="8.5" cy="8.5" r="4.0" fill="#f8f8f8"/></svg>
<div style="left:535px;top:853px;width:1222px;height:482px;background:#c0c0c0"></div>
<div style="left:541px;top:858px;width:1211px;height:29px;background:linear-gradient(#f3f5f7 0,#eceff2 12px,#dadee3 12px,#dfe3e7 27px,#c4c6c8 27px)"></div>
<div class="t" style="left:546px;top:861.7px;font-size:21.9px;letter-spacing:0px">Zeitbedarf (Quartalsprofil), Vorgabewert 2340h</div>
<div style="left:541px;top:887px;width:1211px;height:443px;background:#fff"></div>
<div style="left:1698px;top:874px;width:13px;height:6px;background:#000"></div>
<div style="left:1729px;top:864px;width:16px;height:16px;border:2px solid #000;border-top:4px solid #000;background:#e4e7ea"></div>
<div style="left:541px;top:887px;width:1118px;height:28px;background:#c0c0c0"></div>
<div class="t" style="left:544px;top:891.6px;font-size:19px;letter-spacing:1.25px;color:#1a1a1a">Abrech.-Ziffer</div>
<div class="t" style="left:723px;top:891.6px;font-size:19px;letter-spacing:1.55px;color:#1a1a1a">Zeit je Ziffer</div>
<div class="t" style="left:895px;top:891.6px;font-size:19px;letter-spacing:1.9px;color:#1a1a1a">Tagesprofil</div>
<div class="t" style="left:1027px;top:891.6px;font-size:19px;letter-spacing:1.87px;color:#1a1a1a">Quartalsprofil</div>
<div class="t" style="left:1172px;top:891.6px;font-size:19px;letter-spacing:2.2px;color:#1a1a1a">Häufigkeit</div>
<div class="t" style="left:1309px;top:891.6px;font-size:19px;letter-spacing:1.71px;color:#1a1a1a">Zeitbedarf (Quartalsprofil)</div>
<div class="t" style="left:1593px;top:891.6px;font-size:19px;letter-spacing:1.6px;color:#1a1a1a">Zeit...</div>
<svg style="left:1570px;top:893px" width="18" height="17" viewBox="0 0 18 17"><path d="M1,1 H17 L9,16Z" fill="#e4e4e4" stroke="#d0d0d0" stroke-width="1"/></svg>
<div style="left:541px;top:917px;width:1118px;height:379px;overflow:hidden">
<div class="t" style="left:3px;top:5.1px;font-size:19.5px;letter-spacing:0.3px;color:#222">-</div>
<div class="t" style="left:48.5px;width:300px;text-align:right;top:5.1px;font-size:19.5px;letter-spacing:0.45px;color:#222">20</div>
<div class="t" style="left:354px;top:5.1px;font-size:19.5px;letter-spacing:0.3px;color:#222">-</div>
<div class="t" style="left:486px;top:5.1px;font-size:19.5px;letter-spacing:0.3px;color:#222">-</div>
<div class="t" style="left:462.5px;width:300px;text-align:right;top:5.1px;font-size:19.5px;letter-spacing:0.45px;color:#222">30</div>
<div class="t" style="left:746.5px;width:300px;text-align:right;top:5.1px;font-size:19.5px;letter-spacing:0.45px;color:#222">10 Std.00 Min.</div>
<div class="t" style="left:814.5px;width:300px;text-align:right;top:5.1px;font-size:19.5px;letter-spacing:0.45px;color:#222">10:00</div>
<div class="t" style="left:3px;top:35.5px;font-size:19.5px;letter-spacing:0.3px;color:#222">03004</div>
<div class="t" style="left:48.5px;width:300px;text-align:right;top:35.5px;font-size:19.5px;letter-spacing:0.45px;color:#222">13</div>
<div class="t" style="left:180.5px;width:300px;text-align:right;top:35.5px;font-size:19.5px;letter-spacing:0.45px;color:#222">0</div>
<div class="t" style="left:325.5px;width:300px;text-align:right;top:35.5px;font-size:19.5px;letter-spacing:0.45px;color:#222">1</div>
<div class="t" style="left:462.5px;width:300px;text-align:right;top:35.5px;font-size:19.5px;letter-spacing:0.45px;color:#222">24</div>
<div class="t" style="left:746.5px;width:300px;text-align:right;top:35.5px;font-size:19.5px;letter-spacing:0.45px;color:#222">05 Std.12 Min.</div>
<div class="t" style="left:814.5px;width:300px;text-align:right;top:35.5px;font-size:19.5px;letter-spacing:0.45px;color:#222">05:12</div>
<div class="t" style="left:3px;top:65.8px;font-size:19.5px;letter-spacing:0.3px;color:#222">-</div>
<div class="t" style="left:48.5px;width:300px;text-align:right;top:65.8px;font-size:19.5px;letter-spacing:0.45px;color:#222">23</div>
<div class="t" style="left:354px;top:65.8px;font-size:19.5px;letter-spacing:0.3px;color:#222">-</div>
<div class="t" style="left:486px;top:65.8px;font-size:19.5px;letter-spacing:0.3px;color:#222">-</div>
<div class="t" style="left:462.5px;width:300px;text-align:right;top:65.8px;font-size:19.5px;letter-spacing:0.45px;color:#222">10</div>
<div class="t" style="left:746.5px;width:300px;text-align:right;top:65.8px;font-size:19.5px;letter-spacing:0.45px;color:#222">03 Std.50 Min.</div>
<div class="t" style="left:814.5px;width:300px;text-align:right;top:65.8px;font-size:19.5px;letter-spacing:0.45px;color:#222">03:50</div>
<div class="t" style="left:3px;top:96.2px;font-size:19.5px;letter-spacing:0.3px;color:#222">03003</div>
<div class="t" style="left:48.5px;width:300px;text-align:right;top:96.2px;font-size:19.5px;letter-spacing:0.45px;color:#222">11</div>
<div class="t" style="left:180.5px;width:300px;text-align:right;top:96.2px;font-size:19.5px;letter-spacing:0.45px;color:#222">0</div>
<div class="t" style="left:325.5px;width:300px;text-align:right;top:96.2px;font-size:19.5px;letter-spacing:0.45px;color:#222">1</div>
<div class="t" style="left:462.5px;width:300px;text-align:right;top:96.2px;font-size:19.5px;letter-spacing:0.45px;color:#222">20</div>
<div class="t" style="left:746.5px;width:300px;text-align:right;top:96.2px;font-size:19.5px;letter-spacing:0.45px;color:#222">03 Std.40 Min.</div>
<div class="t" style="left:814.5px;width:300px;text-align:right;top:96.2px;font-size:19.5px;letter-spacing:0.45px;color:#222">03:40</div>
<div class="t" style="left:3px;top:126.5px;font-size:19.5px;letter-spacing:0.3px;color:#222">-</div>
<div class="t" style="left:48.5px;width:300px;text-align:right;top:126.5px;font-size:19.5px;letter-spacing:0.45px;color:#222">70</div>
<div class="t" style="left:180.5px;width:300px;text-align:right;top:126.5px;font-size:19.5px;letter-spacing:0.45px;color:#222">1</div>
<div class="t" style="left:325.5px;width:300px;text-align:right;top:126.5px;font-size:19.5px;letter-spacing:0.45px;color:#222">1</div>
<div class="t" style="left:462.5px;width:300px;text-align:right;top:126.5px;font-size:19.5px;letter-spacing:0.45px;color:#222">3</div>
<div class="t" style="left:746.5px;width:300px;text-align:right;top:126.5px;font-size:19.5px;letter-spacing:0.45px;color:#222">03 Std.30 Min.</div>
<div class="t" style="left:814.5px;width:300px;text-align:right;top:126.5px;font-size:19.5px;letter-spacing:0.45px;color:#222">03:30</div>
<div class="t" style="left:3px;top:156.9px;font-size:19.5px;letter-spacing:0.3px;color:#222">01732</div>
<div class="t" style="left:48.5px;width:300px;text-align:right;top:156.9px;font-size:19.5px;letter-spacing:0.45px;color:#222">21</div>
<div class="t" style="left:180.5px;width:300px;text-align:right;top:156.9px;font-size:19.5px;letter-spacing:0.45px;color:#222">1</div>
<div class="t" style="left:325.5px;width:300px;text-align:right;top:156.9px;font-size:19.5px;letter-spacing:0.45px;color:#222">1</div>
<div class="t" style="left:462.5px;width:300px;text-align:right;top:156.9px;font-size:19.5px;letter-spacing:0.45px;color:#222">9</div>
<div class="t" style="left:746.5px;width:300px;text-align:right;top:156.9px;font-size:19.5px;letter-spacing:0.45px;color:#222">03 Std.09 Min.</div>
<div class="t" style="left:814.5px;width:300px;text-align:right;top:156.9px;font-size:19.5px;letter-spacing:0.45px;color:#222">03:09</div>
<div class="t" style="left:3px;top:187.3px;font-size:19.5px;letter-spacing:0.3px;color:#222">30110</div>
<div class="t" style="left:48.5px;width:300px;text-align:right;top:187.3px;font-size:19.5px;letter-spacing:0.45px;color:#222">31</div>
<div class="t" style="left:180.5px;width:300px;text-align:right;top:187.3px;font-size:19.5px;letter-spacing:0.45px;color:#222">0</div>
<div class="t" style="left:325.5px;width:300px;text-align:right;top:187.3px;font-size:19.5px;letter-spacing:0.45px;color:#222">1</div>
<div class="t" style="left:462.5px;width:300px;text-align:right;top:187.3px;font-size:19.5px;letter-spacing:0.45px;color:#222">5</div>
<div class="t" style="left:746.5px;width:300px;text-align:right;top:187.3px;font-size:19.5px;letter-spacing:0.45px;color:#222">02 Std.35 Min.</div>
<div class="t" style="left:814.5px;width:300px;text-align:right;top:187.3px;font-size:19.5px;letter-spacing:0.45px;color:#222">02:35</div>
<div class="t" style="left:3px;top:217.6px;font-size:19.5px;letter-spacing:0.3px;color:#222">01745</div>
<div class="t" style="left:48.5px;width:300px;text-align:right;top:217.6px;font-size:19.5px;letter-spacing:0.45px;color:#222">16</div>
<div class="t" style="left:180.5px;width:300px;text-align:right;top:217.6px;font-size:19.5px;letter-spacing:0.45px;color:#222">1</div>
<div class="t" style="left:325.5px;width:300px;text-align:right;top:217.6px;font-size:19.5px;letter-spacing:0.45px;color:#222">1</div>
<div class="t" style="left:462.5px;width:300px;text-align:right;top:217.6px;font-size:19.5px;letter-spacing:0.45px;color:#222">9</div>
<div class="t" style="left:746.5px;width:300px;text-align:right;top:217.6px;font-size:19.5px;letter-spacing:0.45px;color:#222">02 Std.24 Min.</div>
<div class="t" style="left:814.5px;width:300px;text-align:right;top:217.6px;font-size:19.5px;letter-spacing:0.45px;color:#222">02:24</div>
<div class="t" style="left:3px;top:248.0px;font-size:19.5px;letter-spacing:0.3px;color:#222">18211</div>
<div class="t" style="left:48.5px;width:300px;text-align:right;top:248.0px;font-size:19.5px;letter-spacing:0.45px;color:#222">18</div>
<div class="t" style="left:180.5px;width:300px;text-align:right;top:248.0px;font-size:19.5px;letter-spacing:0.45px;color:#222">0</div>
<div class="t" style="left:325.5px;width:300px;text-align:right;top:248.0px;font-size:19.5px;letter-spacing:0.45px;color:#222">1</div>
<div class="t" style="left:462.5px;width:300px;text-align:right;top:248.0px;font-size:19.5px;letter-spacing:0.45px;color:#222">8</div>
<div class="t" style="left:746.5px;width:300px;text-align:right;top:248.0px;font-size:19.5px;letter-spacing:0.45px;color:#222">02 Std.24 Min.</div>
<div class="t" style="left:814.5px;width:300px;text-align:right;top:248.0px;font-size:19.5px;letter-spacing:0.45px;color:#222">02:24</div>
<div class="t" style="left:3px;top:278.3px;font-size:19.5px;letter-spacing:0.3px;color:#222">35150</div>
<div class="t" style="left:48.5px;width:300px;text-align:right;top:278.3px;font-size:19.5px;letter-spacing:0.45px;color:#222">70</div>
<div class="t" style="left:180.5px;width:300px;text-align:right;top:278.3px;font-size:19.5px;letter-spacing:0.45px;color:#222">1</div>
<div class="t" style="left:325.5px;width:300px;text-align:right;top:278.3px;font-size:19.5px;letter-spacing:0.45px;color:#222">1</div>
<div class="t" style="left:462.5px;width:300px;text-align:right;top:278.3px;font-size:19.5px;letter-spacing:0.45px;color:#222">2</div>
<div class="t" style="left:746.5px;width:300px;text-align:right;top:278.3px;font-size:19.5px;letter-spacing:0.45px;color:#222">02 Std.20 Min.</div>
<div class="t" style="left:814.5px;width:300px;text-align:right;top:278.3px;font-size:19.5px;letter-spacing:0.45px;color:#222">02:20</div>
<div class="t" style="left:3px;top:308.7px;font-size:19.5px;letter-spacing:0.3px;color:#222">01410</div>
<div class="t" style="left:48.5px;width:300px;text-align:right;top:308.7px;font-size:19.5px;letter-spacing:0.45px;color:#222">20</div>
<div class="t" style="left:180.5px;width:300px;text-align:right;top:308.7px;font-size:19.5px;letter-spacing:0.45px;color:#222">1</div>
<div class="t" style="left:325.5px;width:300px;text-align:right;top:308.7px;font-size:19.5px;letter-spacing:0.45px;color:#222">1</div>
<div class="t" style="left:462.5px;width:300px;text-align:right;top:308.7px;font-size:19.5px;letter-spacing:0.45px;color:#222">6</div>
<div class="t" style="left:746.5px;width:300px;text-align:right;top:308.7px;font-size:19.5px;letter-spacing:0.45px;color:#222">02 Std.00 Min.</div>
<div class="t" style="left:814.5px;width:300px;text-align:right;top:308.7px;font-size:19.5px;letter-spacing:0.45px;color:#222">02:00</div>
<div class="t" style="left:3px;top:339.1px;font-size:19.5px;letter-spacing:0.3px;color:#222">31154</div>
<div class="t" style="left:48.5px;width:300px;text-align:right;top:339.1px;font-size:19.5px;letter-spacing:0.45px;color:#222">55</div>
<div class="t" style="left:180.5px;width:300px;text-align:right;top:339.1px;font-size:19.5px;letter-spacing:0.45px;color:#222">1</div>
<div class="t" style="left:325.5px;width:300px;text-align:right;top:339.1px;font-size:19.5px;letter-spacing:0.45px;color:#222">1</div>
<div class="t" style="left:462.5px;width:300px;text-align:right;top:339.1px;font-size:19.5px;letter-spacing:0.45px;color:#222">2</div>
<div class="t" style="left:746.5px;width:300px;text-align:right;top:339.1px;font-size:19.5px;letter-spacing:0.45px;color:#222">01 Std.50 Min.</div>
<div class="t" style="left:814.5px;width:300px;text-align:right;top:339.1px;font-size:19.5px;letter-spacing:0.45px;color:#222">01:50</div>
<div class="t" style="left:3px;top:369.4px;font-size:19.5px;letter-spacing:0.3px;color:#222">31824</div>
<div class="t" style="left:48.5px;width:300px;text-align:right;top:369.4px;font-size:19.5px;letter-spacing:0.45px;color:#222">83</div>
<div class="t" style="left:180.5px;width:300px;text-align:right;top:369.4px;font-size:19.5px;letter-spacing:0.45px;color:#222">1</div>
<div class="t" style="left:325.5px;width:300px;text-align:right;top:369.4px;font-size:19.5px;letter-spacing:0.45px;color:#222">1</div>
<div class="t" style="left:462.5px;width:300px;text-align:right;top:369.4px;font-size:19.5px;letter-spacing:0.45px;color:#222">1</div>
<div class="t" style="left:746.5px;width:300px;text-align:right;top:369.4px;font-size:19.5px;letter-spacing:0.45px;color:#222">01 Std.23 Min.</div>
<div class="t" style="left:814.5px;width:300px;text-align:right;top:369.4px;font-size:19.5px;letter-spacing:0.45px;color:#222">01:23</div>
</div>
<div style="left:541px;top:915px;width:1118px;height:2px;background:#000"></div>
<div style="left:541px;top:946px;width:1118px;height:2px;background:#000"></div>
<div style="left:541px;top:976px;width:1118px;height:2px;background:#000"></div>
<div style="left:541px;top:1007px;width:1118px;height:2px;background:#000"></div>
<div style="left:541px;top:1037px;width:1118px;height:2px;background:#000"></div>
<div style="left:541px;top:1067px;width:1118px;height:2px;background:#000"></div>
<div style="left:541px;top:1098px;width:1118px;height:2px;background:#000"></div>
<div style="left:541px;top:1128px;width:1118px;height:2px;background:#000"></div>
<div style="left:541px;top:1159px;width:1118px;height:2px;background:#000"></div>
<div style="left:541px;top:1189px;width:1118px;height:2px;background:#000"></div>
<div style="left:541px;top:1219px;width:1118px;height:2px;background:#000"></div>
<div style="left:541px;top:1250px;width:1118px;height:2px;background:#000"></div>
<div style="left:541px;top:1280px;width:1118px;height:2px;background:#000"></div>
<div style="left:719px;top:887px;width:2px;height:409px;background:#000"></div>
<div style="left:891px;top:887px;width:2px;height:409px;background:#000"></div>
<div style="left:1023px;top:887px;width:2px;height:409px;background:#000"></div>
<div style="left:1168px;top:887px;width:2px;height:409px;background:#000"></div>
<div style="left:1305px;top:887px;width:2px;height:409px;background:#000"></div>
<div style="left:1589px;top:887px;width:2px;height:409px;background:#000"></div>
<div style="left:1657px;top:887px;width:2px;height:409px;background:#000"></div>
<div style="left:541px;top:1296px;width:1118px;height:3px;background:#000"></div>
<div style="left:541px;top:1299px;width:1118px;height:27px;background:#e8e8e8"></div>
<div style="left:541px;top:1326px;width:1118px;height:1px;background:#808080"></div>
<div style="left:541px;top:1327px;width:1118px;height:3px;background:#000"></div>
<div style="left:891px;top:1299px;width:2px;height:28px;background:#000"></div>
<div style="left:1023px;top:1299px;width:2px;height:28px;background:#000"></div>
<div style="left:1168px;top:1299px;width:2px;height:28px;background:#000"></div>
<div style="left:1305px;top:1299px;width:2px;height:28px;background:#000"></div>
<div style="left:1589px;top:1299px;width:2px;height:28px;background:#000"></div>
<div style="left:1657px;top:1299px;width:2px;height:28px;background:#000"></div>
<div class="t" style="left:421.5px;width:600px;text-align:right;top:1304.0px;font-size:19.5px;letter-spacing:0.45px;color:#222">2.232</div>
<div class="t" style="left:566.5px;width:600px;text-align:right;top:1304.0px;font-size:19.5px;letter-spacing:0.45px;color:#222">3.393</div>
<div class="t" style="left:703.5px;width:600px;text-align:right;top:1304.0px;font-size:19.5px;letter-spacing:0.45px;color:#222">336</div>
<div class="t" style="left:987.5px;width:600px;text-align:right;top:1304.0px;font-size:19.5px;letter-spacing:0.45px;color:#222">89 Std.07 Min.</div>
<div class="t" style="left:1055.5px;width:600px;text-align:right;top:1304.0px;font-size:19.5px;letter-spacing:0.45px;color:#222">89:07</div>
<div style="left:1732px;top:887px;width:20px;height:30px;background:#4a6f97"></div>
<div style="left:1732px;top:917px;width:20px;height:413px;background:linear-gradient(90deg,#f0f0f0,#fafafa)"></div>
<svg style="left:1734px;top:919px" width="17" height="16" viewBox="0 0 17 16"><defs><linearGradient id="sg1734_919" x1="0" y1="0" x2="1" y2="1"><stop offset="0" stop-color="#6a9ad0"/><stop offset="1" stop-color="#4d78a8"/></linearGradient></defs><path d="M2,0 H15 V2 H17 V14 H15 V16 H2 V14 H0 V2 H2Z" fill="#35608f"/><rect x="2" y="2" width="13" height="12" fill="url(#sg1734_919)"/><path d="M4.0,10.0 L8.5,5.0 L13.0,10.0" fill="none" stroke="#fff" stroke-width="1.5"/></svg>
<svg style="left:1734px;top:939px" width="17" height="6" viewBox="0 0 17 6"><path d="M2,0 H15 V2 H17 V4 H15 V6 H2 V4 H0 V2 H2Z" fill="#35608f"/><rect x="2" y="2" width="13" height="2" fill="#5d8cc4"/></svg>
<svg style="left:1734px;top:1313px" width="17" height="16" viewBox="0 0 17 16"><defs><linearGradient id="sg1734_1313" x1="0" y1="0" x2="1" y2="1"><stop offset="0" stop-color="#6a9ad0"/><stop offset="1" stop-color="#4d78a8"/></linearGradient></defs><path d="M2,0 H15 V2 H17 V14 H15 V16 H2 V14 H0 V2 H2Z" fill="#35608f"/><rect x="2" y="2" width="13" height="12" fill="url(#sg1734_1313)"/><path d="M4.0,6.0 L8.5,11.0 L13.0,6.0" fill="none" stroke="#fff" stroke-width="1.5"/></svg>
<div style="left:1798px;top:273px;width:2px;height:1081px;background:#e0e0e0"></div>
<div style="left:5px;top:1353px;width:1795px;height:1px;background:#e0e0e0"></div></body></html>
